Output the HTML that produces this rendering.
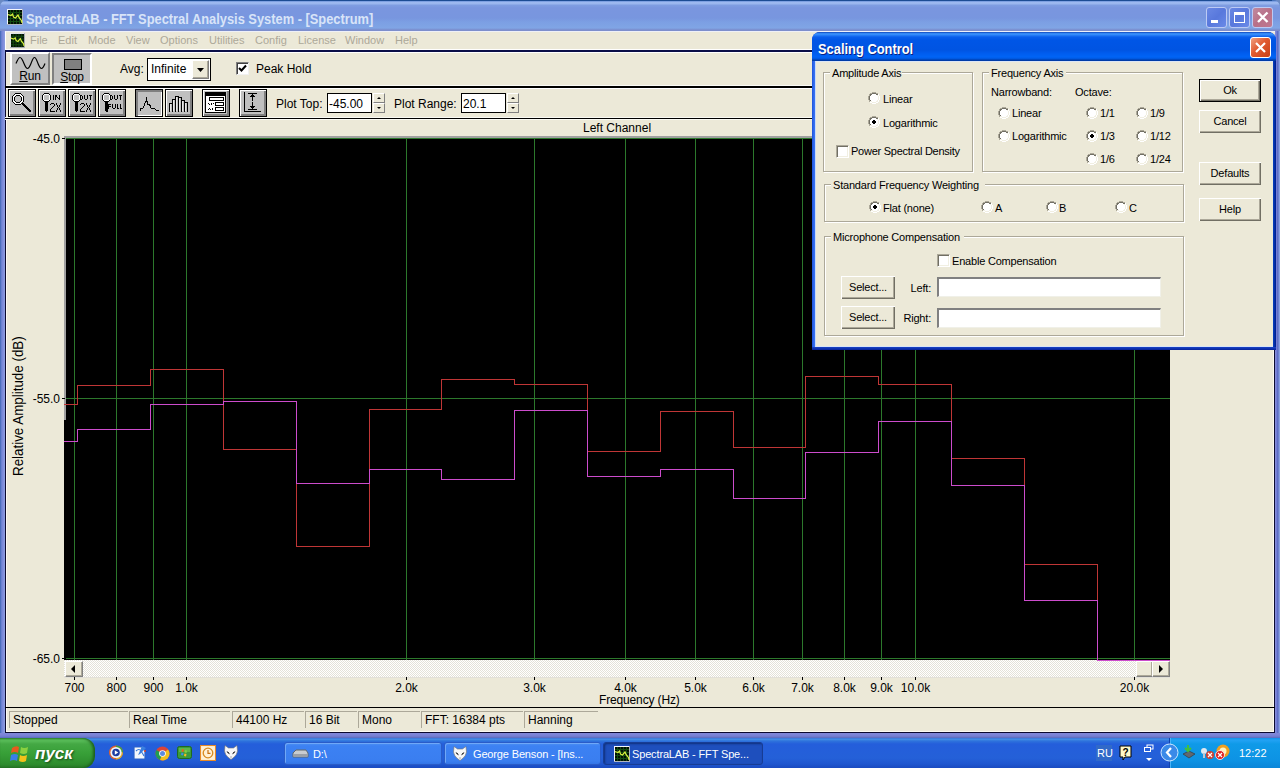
<!DOCTYPE html><html><head><meta charset="utf-8"><style>
html,body{margin:0;padding:0;}body{width:1280px;height:768px;overflow:hidden;position:relative;background:#ECE9D8;font-family:'Liberation Sans',sans-serif;color:#000;}
div{box-sizing:border-box;} svg{position:absolute;overflow:visible;}
</style></head><body>
<div style="position:absolute;left:0px;top:0px;width:1280px;height:32px;background:#6a8ac4;"></div>
<div style="position:absolute;left:0px;top:0px;width:1280px;height:31px;border-radius:7px 7px 0 0;background:linear-gradient(#2a5aa8 0px,#5f88d4 1px,#9db9f0 2px,#9ab6ee 4px,#7f9ee2 5px,#7a96df 8px,#7896df 18px,#7c9fe3 22px,#80a5e5 28px,#7a8ccc 30px,#8090cc 31px);"></div>
<div style="position:absolute;left:8px;top:0px;width:1264px;height:1px;background:#1c4c94;"></div>
<div style="position:absolute;left:0px;top:31px;width:5px;height:707px;background:linear-gradient(90deg,#3c62b2 0px,#5a7ac8 1px,#7888d8 2px,#7a88d8 3px,#8a9ae0 4px,#8a9ae0 5px);"></div>
<div style="position:absolute;left:1275px;top:31px;width:5px;height:707px;background:linear-gradient(90deg,#8c92dc 0px,#7a82d8 1px,#6c7ad2 2px,#5262bc 3px,#88a0e2 4px,#88a0e2 5px);"></div>
<div style="position:absolute;left:0px;top:733px;width:1280px;height:5px;background:linear-gradient(#8088d8 0px,#7c84d8 2px,#6c78cc 4px,#5468b8 5px);"></div>
<svg style="left:7px;top:9px" width="16" height="16" viewBox="0 0 16 16"><rect x="0" y="0" width="16" height="16" fill="#b0b4c0"/><rect x="0" y="0" width="15" height="15" fill="#f4f6fc"/><rect x="1" y="1" width="14" height="14" fill="#031003"/><path d="M1 3.5H15M1 6.5H15M1 9.5H15M1 12.5H15M3.5 1V15M6.5 1V15M9.5 1V15M12.5 1V15" stroke="#124a10" stroke-width="1"/><path d="M1 5.5L4 6.5L5.5 5L6.5 8L8.5 9L11 6L12 8.5L14.5 11.5L15 14" stroke="#d8f040" stroke-width="1.2" fill="none"/></svg>
<div style="position:absolute;left:26px;top:10px;white-space:nowrap;font-size:14px;line-height:18px;font-weight:bold;color:#d8e4f8;transform:scaleX(0.918);transform-origin:0 0;">SpectraLAB - FFT Spectral Analysis System - [Spectrum]</div>
<div style="position:absolute;left:1206px;top:7px;width:21px;height:21px;border:1px solid #bccaf4;border-radius:3px;background:linear-gradient(135deg,#6a88e4,#5878dc 50%,#6a8ae8);"></div><div style="position:absolute;left:1211px;top:20px;width:7px;height:3px;background:#fff;"></div>
<div style="position:absolute;left:1229px;top:7px;width:21px;height:21px;border:1px solid #bccaf4;border-radius:3px;background:linear-gradient(135deg,#6a88e4,#5878dc 50%,#6a8ae8);"></div><div style="position:absolute;left:1234px;top:12px;width:11px;height:11px;border:1px solid #fff;border-top:3px solid #fff;"></div>
<div style="position:absolute;left:1252px;top:7px;width:21px;height:21px;border:1px solid #bccaf4;border-radius:3px;background:linear-gradient(135deg,#c08aa0,#b87088 50%,#c07890);"></div><svg style="left:1252px;top:7px" width="21" height="21"><path d="M6 5.5L15.5 15M15.5 5.5L6 15" stroke="#fff" stroke-width="2.4"/></svg>
<div style="position:absolute;left:5px;top:31px;width:1270px;height:19px;background:#ECE9D8;border-top:1px solid #eef0f8;border-left:1px solid #fff;"></div>
<svg style="left:10px;top:33px" width="15" height="15" viewBox="0 0 16 16"><rect x="0" y="0" width="16" height="16" fill="#b0b4c0"/><rect x="0" y="0" width="15" height="15" fill="#f4f6fc"/><rect x="1" y="1" width="14" height="14" fill="#031003"/><path d="M1 3.5H15M1 6.5H15M1 9.5H15M1 12.5H15M3.5 1V15M6.5 1V15M9.5 1V15M12.5 1V15" stroke="#124a10" stroke-width="1"/><path d="M1 5.5L4 6.5L5.5 5L6.5 8L8.5 9L11 6L12 8.5L14.5 11.5L15 14" stroke="#d8f040" stroke-width="1.2" fill="none"/></svg>
<div style="position:absolute;left:30px;top:34px;white-space:nowrap;font-size:11px;line-height:13px;color:#aca899;">File</div>
<div style="position:absolute;left:58px;top:34px;white-space:nowrap;font-size:11px;line-height:13px;color:#aca899;">Edit</div>
<div style="position:absolute;left:88px;top:34px;white-space:nowrap;font-size:11px;line-height:13px;color:#aca899;">Mode</div>
<div style="position:absolute;left:126px;top:34px;white-space:nowrap;font-size:11px;line-height:13px;color:#aca899;">View</div>
<div style="position:absolute;left:160px;top:34px;white-space:nowrap;font-size:11px;line-height:13px;color:#aca899;">Options</div>
<div style="position:absolute;left:209px;top:34px;white-space:nowrap;font-size:11px;line-height:13px;color:#aca899;">Utilities</div>
<div style="position:absolute;left:255px;top:34px;white-space:nowrap;font-size:11px;line-height:13px;color:#aca899;">Config</div>
<div style="position:absolute;left:298px;top:34px;white-space:nowrap;font-size:11px;line-height:13px;color:#aca899;">License</div>
<div style="position:absolute;left:345px;top:34px;white-space:nowrap;font-size:11px;line-height:13px;color:#aca899;">Window</div>
<div style="position:absolute;left:395px;top:34px;white-space:nowrap;font-size:11px;line-height:13px;color:#aca899;">Help</div>
<div style="position:absolute;left:5px;top:49px;width:1270px;height:1px;background:#fff;"></div>
<div style="position:absolute;left:5px;top:50px;width:1270px;height:2px;background:#0b0f48;"></div>
<div style="position:absolute;left:5px;top:50px;width:1px;height:683px;background:#0a0a30;"></div>
<div style="position:absolute;left:6px;top:52px;width:1px;height:680px;background:#fbfaf4;"></div>
<div style="position:absolute;left:1274px;top:50px;width:1px;height:683px;background:#0a0a30;"></div>
<div style="position:absolute;left:1273px;top:52px;width:1px;height:680px;background:#fbfaf4;"></div>
<div style="position:absolute;left:5px;top:732px;width:1270px;height:1px;background:#0a0a30;"></div>
<div style="position:absolute;left:6px;top:731px;width:1268px;height:1px;background:#fbfaf4;"></div>
<div style="position:absolute;left:6px;top:52px;width:1268px;height:34px;background:#ECE9D8;border-top:1px solid #fff;border-bottom:1px solid #fafaf6;"></div>
<div style="position:absolute;left:10px;top:52px;width:40px;height:33px;background:#c0c0c0;border-top:2px solid #fff;border-left:2px solid #fff;border-right:2px solid #808080;border-bottom:2px solid #808080;"></div>
<svg style="left:10px;top:52px" width="40" height="33"><path d="M6 11.5C7.5 8 8.5 5.5 10 5.5S13 9 14 11.5S16 16.5 17.5 16.5S20 14 21 11.5S23 5.5 24.5 5.5S27 9 28 11.5S30 16.5 31.5 16.5S34 14 35 11.5" stroke="#000" stroke-width="1.2" fill="none"/></svg>
<div style="position:absolute;left:10px;top:69px;white-space:nowrap;font-size:12px;line-height:14px;width:40px;text-align:center;letter-spacing:-0.2px;"><u>R</u>un</div>
<div style="position:absolute;left:52px;top:53px;width:40px;height:32px;background:#c0c0c0;border-top:2px solid #808080;border-left:2px solid #808080;border-right:2px solid #fff;border-bottom:2px solid #fff;"></div>
<div style="position:absolute;left:64px;top:59px;width:18px;height:11px;background:#808080;border:1px solid #000;"></div>
<div style="position:absolute;left:52px;top:70px;white-space:nowrap;font-size:12px;line-height:14px;width:40px;text-align:center;letter-spacing:-0.3px;"><u>S</u>top</div>
<div style="position:absolute;left:120px;top:62px;white-space:nowrap;font-size:12px;line-height:14px;">Avg:</div>
<div style="position:absolute;left:147px;top:58px;width:64px;height:23px;background:#fff;border:1px solid #000;"></div>
<div style="position:absolute;left:151px;top:62px;white-space:nowrap;font-size:12px;line-height:14px;">Infinite</div>
<div style="position:absolute;left:192px;top:60px;width:17px;height:19px;background:#ECE9D8;border-top:1px solid #fff;border-left:1px solid #fff;border-right:1px solid #808080;border-bottom:1px solid #808080;box-shadow:inset -1px -1px #aca899;"></div>
<svg style="left:192px;top:60px" width="17" height="19"><path d="M5 8H12L8.5 12Z" fill="#000"/></svg>
<div style="position:absolute;left:236px;top:62px;width:13px;height:13px;background:#fff;border-top:1px solid #808080;border-left:1px solid #808080;border-right:1px solid #f0f0f0;border-bottom:1px solid #f0f0f0;box-shadow:inset 1px 1px #404040;"></div>
<svg style="left:236px;top:62px" width="13" height="13"><path d="M3 6L5.5 8.5L10 3.5" stroke="#000" stroke-width="2" fill="none"/></svg>
<div style="position:absolute;left:256px;top:62px;white-space:nowrap;font-size:12px;line-height:14px;">Peak Hold</div>
<div style="position:absolute;left:5px;top:86px;width:1270px;height:2px;background:#000;"></div>
<div style="position:absolute;left:6px;top:88px;width:1268px;height:30px;background:#ECE9D8;border-top:1px solid #fff;"></div>
<div style="position:absolute;left:8px;top:89px;width:28px;height:28px;background:#c0c0c0;border:1px solid #000;box-shadow:inset 1px 1px #fff, inset -2px -2px #808080;"></div>
<div style="position:absolute;left:38px;top:89px;width:28px;height:28px;background:#c0c0c0;border:1px solid #000;box-shadow:inset 1px 1px #fff, inset -2px -2px #808080;"></div>
<div style="position:absolute;left:68px;top:89px;width:28px;height:28px;background:#c0c0c0;border:1px solid #000;box-shadow:inset 1px 1px #fff, inset -2px -2px #808080;"></div>
<div style="position:absolute;left:98px;top:89px;width:28px;height:28px;background:#c0c0c0;border:1px solid #000;box-shadow:inset 1px 1px #fff, inset -2px -2px #808080;"></div>
<div style="position:absolute;left:135px;top:89px;width:28px;height:28px;background:#c0c0c0;border:1px solid #000;box-shadow:inset 2px 2px #808080, inset -1px -1px #fff;"></div>
<div style="position:absolute;left:165px;top:89px;width:28px;height:28px;background:#c0c0c0;border:1px solid #000;box-shadow:inset 1px 1px #fff, inset -2px -2px #808080;"></div>
<div style="position:absolute;left:202px;top:89px;width:28px;height:28px;background:#c0c0c0;border:1px solid #000;box-shadow:inset 1px 1px #fff, inset -2px -2px #808080;"></div>
<div style="position:absolute;left:239px;top:89px;width:28px;height:28px;background:#c0c0c0;border:1px solid #000;box-shadow:inset 1px 1px #fff, inset -2px -2px #808080;"></div>
<svg style="left:8px;top:89px" width="28" height="28" shape-rendering="crispEdges"><rect x="5" y="12" width="2" height="1" fill="#fff"/><rect x="13" y="12" width="2" height="1" fill="#fff"/><rect x="5" y="7" width="2" height="1" fill="#fff"/><rect x="13" y="7" width="2" height="1" fill="#fff"/><rect x="6" y="13" width="8" height="1" fill="#fff"/><rect x="5" y="10" width="1" height="1" fill="#fff"/><rect x="14" y="10" width="1" height="1" fill="#fff"/><rect x="7" y="5" width="6" height="1" fill="#fff"/><rect x="6" y="6" width="8" height="1" fill="#fff"/><rect x="7" y="14" width="6" height="1" fill="#fff"/><rect x="5" y="9" width="1" height="1" fill="#fff"/><rect x="14" y="9" width="1" height="1" fill="#fff"/><rect x="5" y="11" width="1" height="1" fill="#fff"/><rect x="14" y="11" width="1" height="1" fill="#fff"/><rect x="5" y="8" width="1" height="1" fill="#fff"/><rect x="14" y="8" width="1" height="1" fill="#fff"/><rect x="7" y="4" width="6" height="1" fill="#000"/><rect x="16" y="17" width="3" height="1" fill="#000"/><rect x="4" y="9" width="1" height="1" fill="#000"/><rect x="6" y="9" width="1" height="1" fill="#000"/><rect x="13" y="9" width="1" height="1" fill="#000"/><rect x="15" y="9" width="1" height="1" fill="#000"/><rect x="19" y="20" width="3" height="1" fill="#000"/><rect x="5" y="13" width="1" height="1" fill="#000"/><rect x="8" y="13" width="4" height="1" fill="#000"/><rect x="14" y="13" width="1" height="1" fill="#000"/><rect x="5" y="6" width="1" height="1" fill="#000"/><rect x="8" y="6" width="4" height="1" fill="#000"/><rect x="14" y="6" width="1" height="1" fill="#000"/><rect x="17" y="18" width="3" height="1" fill="#000"/><rect x="4" y="8" width="1" height="1" fill="#000"/><rect x="6" y="8" width="1" height="1" fill="#000"/><rect x="13" y="8" width="1" height="1" fill="#000"/><rect x="15" y="8" width="1" height="1" fill="#000"/><rect x="6" y="14" width="1" height="1" fill="#000"/><rect x="13" y="14" width="3" height="1" fill="#000"/><rect x="4" y="11" width="1" height="1" fill="#000"/><rect x="6" y="11" width="1" height="1" fill="#000"/><rect x="13" y="11" width="1" height="1" fill="#000"/><rect x="15" y="11" width="1" height="1" fill="#000"/><rect x="18" y="19" width="3" height="1" fill="#000"/><rect x="7" y="15" width="6" height="1" fill="#000"/><rect x="14" y="15" width="3" height="1" fill="#000"/><rect x="4" y="10" width="1" height="1" fill="#000"/><rect x="6" y="10" width="1" height="1" fill="#000"/><rect x="13" y="10" width="1" height="1" fill="#000"/><rect x="15" y="10" width="1" height="1" fill="#000"/><rect x="4" y="7" width="1" height="1" fill="#000"/><rect x="7" y="7" width="1" height="1" fill="#000"/><rect x="12" y="7" width="1" height="1" fill="#000"/><rect x="15" y="7" width="1" height="1" fill="#000"/><rect x="15" y="16" width="3" height="1" fill="#000"/><rect x="4" y="12" width="1" height="1" fill="#000"/><rect x="7" y="12" width="1" height="1" fill="#000"/><rect x="12" y="12" width="1" height="1" fill="#000"/><rect x="15" y="12" width="1" height="1" fill="#000"/><rect x="20" y="21" width="3" height="1" fill="#000"/><rect x="6" y="5" width="1" height="1" fill="#000"/><rect x="13" y="5" width="1" height="1" fill="#000"/><rect x="21" y="22" width="2" height="1" fill="#000"/></svg>
<svg style="left:38px;top:89px" width="28" height="28" shape-rendering="crispEdges"><rect x="5" y="7" width="1" height="1" fill="#fff"/><rect x="11" y="7" width="1" height="1" fill="#fff"/><rect x="6" y="5" width="5" height="1" fill="#fff"/><rect x="5" y="10" width="1" height="1" fill="#fff"/><rect x="11" y="10" width="1" height="1" fill="#fff"/><rect x="6" y="11" width="5" height="1" fill="#fff"/><rect x="5" y="8" width="1" height="1" fill="#fff"/><rect x="11" y="8" width="1" height="1" fill="#fff"/><rect x="5" y="6" width="1" height="1" fill="#fff"/><rect x="11" y="6" width="1" height="1" fill="#fff"/><rect x="5" y="9" width="1" height="1" fill="#fff"/><rect x="11" y="9" width="1" height="1" fill="#fff"/><rect x="7" y="17" width="3" height="1" fill="#000"/><rect x="15" y="17" width="1" height="1" fill="#000"/><rect x="19" y="17" width="1" height="1" fill="#000"/><rect x="21" y="17" width="1" height="1" fill="#000"/><rect x="7" y="16" width="3" height="1" fill="#000"/><rect x="16" y="16" width="1" height="1" fill="#000"/><rect x="19" y="16" width="1" height="1" fill="#000"/><rect x="21" y="16" width="1" height="1" fill="#000"/><rect x="4" y="9" width="1" height="1" fill="#000"/><rect x="12" y="9" width="1" height="1" fill="#000"/><rect x="15" y="9" width="1" height="1" fill="#000"/><rect x="17" y="9" width="1" height="1" fill="#000"/><rect x="20" y="9" width="2" height="1" fill="#000"/><rect x="5" y="5" width="1" height="1" fill="#000"/><rect x="11" y="5" width="1" height="1" fill="#000"/><rect x="8" y="22" width="1" height="1" fill="#000"/><rect x="12" y="22" width="5" height="1" fill="#000"/><rect x="18" y="22" width="1" height="1" fill="#000"/><rect x="22" y="22" width="1" height="1" fill="#000"/><rect x="7" y="18" width="3" height="1" fill="#000"/><rect x="14" y="18" width="1" height="1" fill="#000"/><rect x="20" y="18" width="1" height="1" fill="#000"/><rect x="7" y="14" width="3" height="1" fill="#000"/><rect x="13" y="14" width="3" height="1" fill="#000"/><rect x="18" y="14" width="1" height="1" fill="#000"/><rect x="22" y="14" width="1" height="1" fill="#000"/><rect x="7" y="19" width="3" height="1" fill="#000"/><rect x="13" y="19" width="1" height="1" fill="#000"/><rect x="19" y="19" width="1" height="1" fill="#000"/><rect x="21" y="19" width="1" height="1" fill="#000"/><rect x="4" y="7" width="1" height="1" fill="#000"/><rect x="12" y="7" width="1" height="1" fill="#000"/><rect x="15" y="7" width="1" height="1" fill="#000"/><rect x="17" y="7" width="2" height="1" fill="#000"/><rect x="21" y="7" width="1" height="1" fill="#000"/><rect x="6" y="4" width="5" height="1" fill="#000"/><rect x="7" y="15" width="3" height="1" fill="#000"/><rect x="12" y="15" width="1" height="1" fill="#000"/><rect x="16" y="15" width="1" height="1" fill="#000"/><rect x="18" y="15" width="1" height="1" fill="#000"/><rect x="22" y="15" width="1" height="1" fill="#000"/><rect x="6" y="12" width="5" height="1" fill="#000"/><rect x="7" y="21" width="3" height="1" fill="#000"/><rect x="12" y="21" width="1" height="1" fill="#000"/><rect x="18" y="21" width="1" height="1" fill="#000"/><rect x="22" y="21" width="1" height="1" fill="#000"/><rect x="7" y="20" width="3" height="1" fill="#000"/><rect x="12" y="20" width="1" height="1" fill="#000"/><rect x="19" y="20" width="1" height="1" fill="#000"/><rect x="21" y="20" width="1" height="1" fill="#000"/><rect x="4" y="6" width="1" height="1" fill="#000"/><rect x="12" y="6" width="1" height="1" fill="#000"/><rect x="15" y="6" width="1" height="1" fill="#000"/><rect x="17" y="6" width="2" height="1" fill="#000"/><rect x="21" y="6" width="1" height="1" fill="#000"/><rect x="4" y="8" width="1" height="1" fill="#000"/><rect x="12" y="8" width="1" height="1" fill="#000"/><rect x="15" y="8" width="1" height="1" fill="#000"/><rect x="17" y="8" width="1" height="1" fill="#000"/><rect x="19" y="8" width="1" height="1" fill="#000"/><rect x="21" y="8" width="1" height="1" fill="#000"/><rect x="5" y="11" width="1" height="1" fill="#000"/><rect x="11" y="11" width="1" height="1" fill="#000"/><rect x="7" y="13" width="3" height="1" fill="#000"/><rect x="4" y="10" width="1" height="1" fill="#000"/><rect x="12" y="10" width="1" height="1" fill="#000"/><rect x="15" y="10" width="1" height="1" fill="#000"/><rect x="17" y="10" width="1" height="1" fill="#000"/><rect x="21" y="10" width="1" height="1" fill="#000"/></svg>
<svg style="left:68px;top:89px" width="28" height="28" shape-rendering="crispEdges"><rect x="5" y="7" width="1" height="1" fill="#fff"/><rect x="11" y="7" width="1" height="1" fill="#fff"/><rect x="6" y="5" width="5" height="1" fill="#fff"/><rect x="5" y="10" width="1" height="1" fill="#fff"/><rect x="11" y="10" width="1" height="1" fill="#fff"/><rect x="6" y="11" width="5" height="1" fill="#fff"/><rect x="5" y="8" width="1" height="1" fill="#fff"/><rect x="11" y="8" width="1" height="1" fill="#fff"/><rect x="5" y="6" width="1" height="1" fill="#fff"/><rect x="11" y="6" width="1" height="1" fill="#fff"/><rect x="5" y="9" width="1" height="1" fill="#fff"/><rect x="11" y="9" width="1" height="1" fill="#fff"/><rect x="7" y="17" width="3" height="1" fill="#000"/><rect x="15" y="17" width="1" height="1" fill="#000"/><rect x="19" y="17" width="1" height="1" fill="#000"/><rect x="21" y="17" width="1" height="1" fill="#000"/><rect x="7" y="16" width="3" height="1" fill="#000"/><rect x="16" y="16" width="1" height="1" fill="#000"/><rect x="19" y="16" width="1" height="1" fill="#000"/><rect x="21" y="16" width="1" height="1" fill="#000"/><rect x="4" y="9" width="1" height="1" fill="#000"/><rect x="12" y="9" width="1" height="1" fill="#000"/><rect x="14" y="9" width="1" height="1" fill="#000"/><rect x="16" y="9" width="1" height="1" fill="#000"/><rect x="19" y="9" width="1" height="1" fill="#000"/><rect x="22" y="9" width="1" height="1" fill="#000"/><rect x="5" y="5" width="1" height="1" fill="#000"/><rect x="11" y="5" width="1" height="1" fill="#000"/><rect x="8" y="22" width="1" height="1" fill="#000"/><rect x="12" y="22" width="5" height="1" fill="#000"/><rect x="18" y="22" width="1" height="1" fill="#000"/><rect x="22" y="22" width="1" height="1" fill="#000"/><rect x="7" y="18" width="3" height="1" fill="#000"/><rect x="14" y="18" width="1" height="1" fill="#000"/><rect x="20" y="18" width="1" height="1" fill="#000"/><rect x="7" y="14" width="3" height="1" fill="#000"/><rect x="13" y="14" width="3" height="1" fill="#000"/><rect x="18" y="14" width="1" height="1" fill="#000"/><rect x="22" y="14" width="1" height="1" fill="#000"/><rect x="4" y="10" width="1" height="1" fill="#000"/><rect x="12" y="10" width="2" height="1" fill="#000"/><rect x="17" y="10" width="2" height="1" fill="#000"/><rect x="22" y="10" width="1" height="1" fill="#000"/><rect x="7" y="19" width="3" height="1" fill="#000"/><rect x="13" y="19" width="1" height="1" fill="#000"/><rect x="19" y="19" width="1" height="1" fill="#000"/><rect x="21" y="19" width="1" height="1" fill="#000"/><rect x="6" y="4" width="5" height="1" fill="#000"/><rect x="4" y="6" width="1" height="1" fill="#000"/><rect x="12" y="6" width="2" height="1" fill="#000"/><rect x="16" y="6" width="1" height="1" fill="#000"/><rect x="19" y="6" width="1" height="1" fill="#000"/><rect x="21" y="6" width="3" height="1" fill="#000"/><rect x="7" y="15" width="3" height="1" fill="#000"/><rect x="12" y="15" width="1" height="1" fill="#000"/><rect x="16" y="15" width="1" height="1" fill="#000"/><rect x="18" y="15" width="1" height="1" fill="#000"/><rect x="22" y="15" width="1" height="1" fill="#000"/><rect x="6" y="12" width="5" height="1" fill="#000"/><rect x="7" y="21" width="3" height="1" fill="#000"/><rect x="12" y="21" width="1" height="1" fill="#000"/><rect x="18" y="21" width="1" height="1" fill="#000"/><rect x="22" y="21" width="1" height="1" fill="#000"/><rect x="4" y="8" width="1" height="1" fill="#000"/><rect x="12" y="8" width="1" height="1" fill="#000"/><rect x="14" y="8" width="1" height="1" fill="#000"/><rect x="16" y="8" width="1" height="1" fill="#000"/><rect x="19" y="8" width="1" height="1" fill="#000"/><rect x="22" y="8" width="1" height="1" fill="#000"/><rect x="7" y="20" width="3" height="1" fill="#000"/><rect x="12" y="20" width="1" height="1" fill="#000"/><rect x="19" y="20" width="1" height="1" fill="#000"/><rect x="21" y="20" width="1" height="1" fill="#000"/><rect x="4" y="7" width="1" height="1" fill="#000"/><rect x="12" y="7" width="1" height="1" fill="#000"/><rect x="14" y="7" width="1" height="1" fill="#000"/><rect x="16" y="7" width="1" height="1" fill="#000"/><rect x="19" y="7" width="1" height="1" fill="#000"/><rect x="22" y="7" width="1" height="1" fill="#000"/><rect x="5" y="11" width="1" height="1" fill="#000"/><rect x="11" y="11" width="1" height="1" fill="#000"/><rect x="7" y="13" width="3" height="1" fill="#000"/></svg>
<svg style="left:98px;top:89px" width="28" height="28" shape-rendering="crispEdges"><rect x="5" y="7" width="1" height="1" fill="#fff"/><rect x="11" y="7" width="1" height="1" fill="#fff"/><rect x="6" y="5" width="5" height="1" fill="#fff"/><rect x="5" y="10" width="1" height="1" fill="#fff"/><rect x="11" y="10" width="1" height="1" fill="#fff"/><rect x="8" y="18" width="1" height="1" fill="#fff"/><rect x="6" y="11" width="5" height="1" fill="#fff"/><rect x="5" y="8" width="1" height="1" fill="#fff"/><rect x="11" y="8" width="1" height="1" fill="#fff"/><rect x="8" y="15" width="1" height="1" fill="#fff"/><rect x="5" y="6" width="1" height="1" fill="#fff"/><rect x="11" y="6" width="1" height="1" fill="#fff"/><rect x="5" y="9" width="1" height="1" fill="#fff"/><rect x="11" y="9" width="1" height="1" fill="#fff"/><rect x="8" y="17" width="1" height="1" fill="#fff"/><rect x="8" y="16" width="1" height="1" fill="#fff"/><rect x="7" y="17" width="6" height="1" fill="#000"/><rect x="14" y="17" width="1" height="1" fill="#000"/><rect x="17" y="17" width="1" height="1" fill="#000"/><rect x="19" y="17" width="1" height="1" fill="#000"/><rect x="22" y="17" width="1" height="1" fill="#000"/><rect x="4" y="9" width="1" height="1" fill="#000"/><rect x="12" y="9" width="1" height="1" fill="#000"/><rect x="14" y="9" width="1" height="1" fill="#000"/><rect x="16" y="9" width="1" height="1" fill="#000"/><rect x="19" y="9" width="1" height="1" fill="#000"/><rect x="22" y="9" width="1" height="1" fill="#000"/><rect x="5" y="5" width="1" height="1" fill="#000"/><rect x="11" y="5" width="1" height="1" fill="#000"/><rect x="7" y="18" width="4" height="1" fill="#000"/><rect x="14" y="18" width="1" height="1" fill="#000"/><rect x="17" y="18" width="1" height="1" fill="#000"/><rect x="19" y="18" width="1" height="1" fill="#000"/><rect x="22" y="18" width="1" height="1" fill="#000"/><rect x="4" y="10" width="1" height="1" fill="#000"/><rect x="12" y="10" width="2" height="1" fill="#000"/><rect x="17" y="10" width="2" height="1" fill="#000"/><rect x="22" y="10" width="1" height="1" fill="#000"/><rect x="7" y="19" width="4" height="1" fill="#000"/><rect x="15" y="19" width="2" height="1" fill="#000"/><rect x="19" y="19" width="2" height="1" fill="#000"/><rect x="22" y="19" width="2" height="1" fill="#000"/><rect x="7" y="15" width="6" height="1" fill="#000"/><rect x="14" y="15" width="1" height="1" fill="#000"/><rect x="17" y="15" width="1" height="1" fill="#000"/><rect x="19" y="15" width="1" height="1" fill="#000"/><rect x="22" y="15" width="1" height="1" fill="#000"/><rect x="6" y="4" width="5" height="1" fill="#000"/><rect x="4" y="6" width="1" height="1" fill="#000"/><rect x="12" y="6" width="2" height="1" fill="#000"/><rect x="16" y="6" width="1" height="1" fill="#000"/><rect x="19" y="6" width="1" height="1" fill="#000"/><rect x="21" y="6" width="3" height="1" fill="#000"/><rect x="6" y="12" width="5" height="1" fill="#000"/><rect x="7" y="21" width="3" height="1" fill="#000"/><rect x="4" y="8" width="1" height="1" fill="#000"/><rect x="12" y="8" width="1" height="1" fill="#000"/><rect x="14" y="8" width="1" height="1" fill="#000"/><rect x="16" y="8" width="1" height="1" fill="#000"/><rect x="19" y="8" width="1" height="1" fill="#000"/><rect x="22" y="8" width="1" height="1" fill="#000"/><rect x="7" y="16" width="4" height="1" fill="#000"/><rect x="14" y="16" width="1" height="1" fill="#000"/><rect x="17" y="16" width="1" height="1" fill="#000"/><rect x="19" y="16" width="1" height="1" fill="#000"/><rect x="22" y="16" width="1" height="1" fill="#000"/><rect x="7" y="14" width="3" height="1" fill="#000"/><rect x="4" y="7" width="1" height="1" fill="#000"/><rect x="12" y="7" width="1" height="1" fill="#000"/><rect x="14" y="7" width="1" height="1" fill="#000"/><rect x="16" y="7" width="1" height="1" fill="#000"/><rect x="19" y="7" width="1" height="1" fill="#000"/><rect x="22" y="7" width="1" height="1" fill="#000"/><rect x="7" y="20" width="3" height="1" fill="#000"/><rect x="5" y="11" width="1" height="1" fill="#000"/><rect x="11" y="11" width="1" height="1" fill="#000"/><rect x="7" y="13" width="3" height="1" fill="#000"/><rect x="8" y="22" width="2" height="1" fill="#000"/></svg>
<svg style="left:135px;top:89px" width="28" height="28" shape-rendering="crispEdges"><rect x="10" y="13" width="1" height="1" fill="#000"/><rect x="12" y="13" width="1" height="1" fill="#000"/><rect x="5" y="20" width="1" height="1" fill="#000"/><rect x="20" y="20" width="1" height="1" fill="#000"/><rect x="9" y="16" width="1" height="1" fill="#000"/><rect x="14" y="16" width="2" height="1" fill="#000"/><rect x="9" y="14" width="1" height="1" fill="#000"/><rect x="12" y="14" width="1" height="1" fill="#000"/><rect x="5" y="19" width="3" height="1" fill="#000"/><rect x="16" y="19" width="4" height="1" fill="#000"/><rect x="8" y="18" width="1" height="1" fill="#000"/><rect x="15" y="18" width="1" height="1" fill="#000"/><rect x="11" y="8" width="1" height="1" fill="#000"/><rect x="10" y="12" width="3" height="1" fill="#000"/><rect x="11" y="11" width="1" height="1" fill="#000"/><rect x="8" y="17" width="1" height="1" fill="#000"/><rect x="15" y="17" width="1" height="1" fill="#000"/><rect x="5" y="21" width="1" height="1" fill="#000"/><rect x="21" y="21" width="3" height="1" fill="#000"/><rect x="9" y="15" width="1" height="1" fill="#000"/><rect x="12" y="15" width="3" height="1" fill="#000"/><rect x="11" y="10" width="1" height="1" fill="#000"/><rect x="11" y="9" width="1" height="1" fill="#000"/></svg>
<svg style="left:165px;top:89px" width="28" height="28" shape-rendering="crispEdges"><rect x="8" y="14" width="1" height="1" fill="#e8e8e8"/><rect x="11" y="14" width="1" height="1" fill="#e8e8e8"/><rect x="14" y="14" width="1" height="1" fill="#e8e8e8"/><rect x="17" y="14" width="1" height="1" fill="#e8e8e8"/><rect x="20" y="14" width="1" height="1" fill="#e8e8e8"/><rect x="5" y="17" width="1" height="1" fill="#e8e8e8"/><rect x="8" y="17" width="1" height="1" fill="#e8e8e8"/><rect x="11" y="17" width="1" height="1" fill="#e8e8e8"/><rect x="14" y="17" width="1" height="1" fill="#e8e8e8"/><rect x="17" y="17" width="1" height="1" fill="#e8e8e8"/><rect x="20" y="17" width="1" height="1" fill="#e8e8e8"/><rect x="11" y="10" width="1" height="1" fill="#e8e8e8"/><rect x="14" y="10" width="1" height="1" fill="#e8e8e8"/><rect x="5" y="16" width="1" height="1" fill="#e8e8e8"/><rect x="8" y="16" width="1" height="1" fill="#e8e8e8"/><rect x="11" y="16" width="1" height="1" fill="#e8e8e8"/><rect x="14" y="16" width="1" height="1" fill="#e8e8e8"/><rect x="17" y="16" width="1" height="1" fill="#e8e8e8"/><rect x="20" y="16" width="1" height="1" fill="#e8e8e8"/><rect x="5" y="19" width="1" height="1" fill="#e8e8e8"/><rect x="8" y="19" width="1" height="1" fill="#e8e8e8"/><rect x="11" y="19" width="1" height="1" fill="#e8e8e8"/><rect x="14" y="19" width="1" height="1" fill="#e8e8e8"/><rect x="17" y="19" width="1" height="1" fill="#e8e8e8"/><rect x="20" y="19" width="1" height="1" fill="#e8e8e8"/><rect x="5" y="20" width="1" height="1" fill="#e8e8e8"/><rect x="8" y="20" width="1" height="1" fill="#e8e8e8"/><rect x="11" y="20" width="1" height="1" fill="#e8e8e8"/><rect x="14" y="20" width="1" height="1" fill="#e8e8e8"/><rect x="17" y="20" width="1" height="1" fill="#e8e8e8"/><rect x="20" y="20" width="1" height="1" fill="#e8e8e8"/><rect x="8" y="13" width="1" height="1" fill="#e8e8e8"/><rect x="11" y="13" width="1" height="1" fill="#e8e8e8"/><rect x="14" y="13" width="1" height="1" fill="#e8e8e8"/><rect x="17" y="13" width="1" height="1" fill="#e8e8e8"/><rect x="8" y="12" width="1" height="1" fill="#e8e8e8"/><rect x="11" y="12" width="1" height="1" fill="#e8e8e8"/><rect x="14" y="12" width="1" height="1" fill="#e8e8e8"/><rect x="17" y="12" width="1" height="1" fill="#e8e8e8"/><rect x="5" y="15" width="1" height="1" fill="#e8e8e8"/><rect x="8" y="15" width="1" height="1" fill="#e8e8e8"/><rect x="11" y="15" width="1" height="1" fill="#e8e8e8"/><rect x="14" y="15" width="1" height="1" fill="#e8e8e8"/><rect x="17" y="15" width="1" height="1" fill="#e8e8e8"/><rect x="20" y="15" width="1" height="1" fill="#e8e8e8"/><rect x="5" y="18" width="1" height="1" fill="#e8e8e8"/><rect x="8" y="18" width="1" height="1" fill="#e8e8e8"/><rect x="11" y="18" width="1" height="1" fill="#e8e8e8"/><rect x="14" y="18" width="1" height="1" fill="#e8e8e8"/><rect x="17" y="18" width="1" height="1" fill="#e8e8e8"/><rect x="20" y="18" width="1" height="1" fill="#e8e8e8"/><rect x="11" y="8" width="1" height="1" fill="#e8e8e8"/><rect x="5" y="21" width="1" height="1" fill="#e8e8e8"/><rect x="8" y="21" width="1" height="1" fill="#e8e8e8"/><rect x="11" y="21" width="1" height="1" fill="#e8e8e8"/><rect x="14" y="21" width="1" height="1" fill="#e8e8e8"/><rect x="17" y="21" width="1" height="1" fill="#e8e8e8"/><rect x="20" y="21" width="1" height="1" fill="#e8e8e8"/><rect x="8" y="11" width="1" height="1" fill="#e8e8e8"/><rect x="11" y="11" width="1" height="1" fill="#e8e8e8"/><rect x="14" y="11" width="1" height="1" fill="#e8e8e8"/><rect x="11" y="9" width="1" height="1" fill="#e8e8e8"/><rect x="14" y="9" width="1" height="1" fill="#e8e8e8"/><rect x="4" y="20" width="1" height="1" fill="#000"/><rect x="7" y="20" width="1" height="1" fill="#000"/><rect x="10" y="20" width="1" height="1" fill="#000"/><rect x="13" y="20" width="1" height="1" fill="#000"/><rect x="16" y="20" width="1" height="1" fill="#000"/><rect x="19" y="20" width="1" height="1" fill="#000"/><rect x="22" y="20" width="1" height="1" fill="#000"/><rect x="4" y="17" width="1" height="1" fill="#000"/><rect x="7" y="17" width="1" height="1" fill="#000"/><rect x="10" y="17" width="1" height="1" fill="#000"/><rect x="13" y="17" width="1" height="1" fill="#000"/><rect x="16" y="17" width="1" height="1" fill="#000"/><rect x="19" y="17" width="1" height="1" fill="#000"/><rect x="22" y="17" width="1" height="1" fill="#000"/><rect x="4" y="18" width="1" height="1" fill="#000"/><rect x="7" y="18" width="1" height="1" fill="#000"/><rect x="10" y="18" width="1" height="1" fill="#000"/><rect x="13" y="18" width="1" height="1" fill="#000"/><rect x="16" y="18" width="1" height="1" fill="#000"/><rect x="19" y="18" width="1" height="1" fill="#000"/><rect x="22" y="18" width="1" height="1" fill="#000"/><rect x="10" y="8" width="1" height="1" fill="#000"/><rect x="13" y="8" width="4" height="1" fill="#000"/><rect x="7" y="13" width="1" height="1" fill="#000"/><rect x="10" y="13" width="1" height="1" fill="#000"/><rect x="13" y="13" width="1" height="1" fill="#000"/><rect x="16" y="13" width="1" height="1" fill="#000"/><rect x="19" y="13" width="4" height="1" fill="#000"/><rect x="7" y="10" width="4" height="1" fill="#000"/><rect x="13" y="10" width="1" height="1" fill="#000"/><rect x="16" y="10" width="1" height="1" fill="#000"/><rect x="4" y="22" width="1" height="1" fill="#000"/><rect x="7" y="22" width="1" height="1" fill="#000"/><rect x="10" y="22" width="1" height="1" fill="#000"/><rect x="13" y="22" width="1" height="1" fill="#000"/><rect x="16" y="22" width="1" height="1" fill="#000"/><rect x="19" y="22" width="1" height="1" fill="#000"/><rect x="22" y="22" width="1" height="1" fill="#000"/><rect x="4" y="19" width="1" height="1" fill="#000"/><rect x="7" y="19" width="1" height="1" fill="#000"/><rect x="10" y="19" width="1" height="1" fill="#000"/><rect x="13" y="19" width="1" height="1" fill="#000"/><rect x="16" y="19" width="1" height="1" fill="#000"/><rect x="19" y="19" width="1" height="1" fill="#000"/><rect x="22" y="19" width="1" height="1" fill="#000"/><rect x="7" y="11" width="1" height="1" fill="#000"/><rect x="10" y="11" width="1" height="1" fill="#000"/><rect x="13" y="11" width="1" height="1" fill="#000"/><rect x="16" y="11" width="4" height="1" fill="#000"/><rect x="10" y="7" width="4" height="1" fill="#000"/><rect x="4" y="15" width="1" height="1" fill="#000"/><rect x="7" y="15" width="1" height="1" fill="#000"/><rect x="10" y="15" width="1" height="1" fill="#000"/><rect x="13" y="15" width="1" height="1" fill="#000"/><rect x="16" y="15" width="1" height="1" fill="#000"/><rect x="19" y="15" width="1" height="1" fill="#000"/><rect x="22" y="15" width="1" height="1" fill="#000"/><rect x="7" y="12" width="1" height="1" fill="#000"/><rect x="10" y="12" width="1" height="1" fill="#000"/><rect x="13" y="12" width="1" height="1" fill="#000"/><rect x="16" y="12" width="1" height="1" fill="#000"/><rect x="19" y="12" width="1" height="1" fill="#000"/><rect x="4" y="21" width="1" height="1" fill="#000"/><rect x="7" y="21" width="1" height="1" fill="#000"/><rect x="10" y="21" width="1" height="1" fill="#000"/><rect x="13" y="21" width="1" height="1" fill="#000"/><rect x="16" y="21" width="1" height="1" fill="#000"/><rect x="19" y="21" width="1" height="1" fill="#000"/><rect x="22" y="21" width="1" height="1" fill="#000"/><rect x="4" y="14" width="4" height="1" fill="#000"/><rect x="10" y="14" width="1" height="1" fill="#000"/><rect x="13" y="14" width="1" height="1" fill="#000"/><rect x="16" y="14" width="1" height="1" fill="#000"/><rect x="19" y="14" width="1" height="1" fill="#000"/><rect x="22" y="14" width="1" height="1" fill="#000"/><rect x="4" y="16" width="1" height="1" fill="#000"/><rect x="7" y="16" width="1" height="1" fill="#000"/><rect x="10" y="16" width="1" height="1" fill="#000"/><rect x="13" y="16" width="1" height="1" fill="#000"/><rect x="16" y="16" width="1" height="1" fill="#000"/><rect x="19" y="16" width="1" height="1" fill="#000"/><rect x="22" y="16" width="1" height="1" fill="#000"/><rect x="10" y="9" width="1" height="1" fill="#000"/><rect x="13" y="9" width="1" height="1" fill="#000"/><rect x="16" y="9" width="1" height="1" fill="#000"/></svg>
<svg style="left:202px;top:89px" width="28" height="28" shape-rendering="crispEdges"><rect x="4" y="21" width="19" height="1" fill="#fff"/><rect x="4" y="18" width="19" height="1" fill="#fff"/><rect x="4" y="20" width="19" height="1" fill="#fff"/><rect x="4" y="17" width="19" height="1" fill="#fff"/><rect x="4" y="16" width="19" height="1" fill="#fff"/><rect x="4" y="9" width="19" height="1" fill="#fff"/><rect x="4" y="13" width="19" height="1" fill="#fff"/><rect x="4" y="10" width="19" height="1" fill="#fff"/><rect x="4" y="8" width="19" height="1" fill="#fff"/><rect x="4" y="12" width="19" height="1" fill="#fff"/><rect x="4" y="19" width="19" height="1" fill="#fff"/><rect x="4" y="14" width="19" height="1" fill="#fff"/><rect x="4" y="22" width="19" height="1" fill="#fff"/><rect x="4" y="11" width="19" height="1" fill="#fff"/><rect x="4" y="15" width="19" height="1" fill="#fff"/><rect x="4" y="7" width="19" height="1" fill="#fff"/><rect x="4" y="4" width="1" height="1" fill="#c8c8c8"/><rect x="6" y="4" width="14" height="1" fill="#c8c8c8"/><rect x="21" y="4" width="2" height="1" fill="#c8c8c8"/><rect x="4" y="5" width="1" height="1" fill="#c8c8c8"/><rect x="6" y="5" width="1" height="1" fill="#c8c8c8"/><rect x="8" y="5" width="1" height="1" fill="#c8c8c8"/><rect x="10" y="5" width="1" height="1" fill="#c8c8c8"/><rect x="12" y="5" width="1" height="1" fill="#c8c8c8"/><rect x="14" y="5" width="1" height="1" fill="#c8c8c8"/><rect x="16" y="5" width="1" height="1" fill="#c8c8c8"/><rect x="18" y="5" width="1" height="1" fill="#c8c8c8"/><rect x="21" y="5" width="2" height="1" fill="#c8c8c8"/><rect x="3" y="4" width="21" height="1" fill="#000"/><rect x="3" y="21" width="1" height="1" fill="#000"/><rect x="13" y="21" width="9" height="1" fill="#000"/><rect x="23" y="21" width="1" height="1" fill="#000"/><rect x="3" y="16" width="1" height="1" fill="#000"/><rect x="13" y="16" width="9" height="1" fill="#000"/><rect x="23" y="16" width="1" height="1" fill="#000"/><rect x="3" y="3" width="21" height="1" fill="#000"/><rect x="3" y="13" width="1" height="1" fill="#000"/><rect x="13" y="13" width="9" height="1" fill="#000"/><rect x="23" y="13" width="1" height="1" fill="#000"/><rect x="3" y="6" width="21" height="1" fill="#000"/><rect x="3" y="8" width="1" height="1" fill="#000"/><rect x="7" y="8" width="15" height="1" fill="#000"/><rect x="23" y="8" width="1" height="1" fill="#000"/><rect x="3" y="5" width="21" height="1" fill="#000"/><rect x="3" y="22" width="1" height="1" fill="#000"/><rect x="23" y="22" width="1" height="1" fill="#000"/><rect x="3" y="18" width="1" height="1" fill="#000"/><rect x="13" y="18" width="9" height="1" fill="#000"/><rect x="23" y="18" width="1" height="1" fill="#000"/><rect x="3" y="14" width="1" height="1" fill="#000"/><rect x="6" y="14" width="1" height="1" fill="#000"/><rect x="9" y="14" width="1" height="1" fill="#000"/><rect x="11" y="14" width="1" height="1" fill="#000"/><rect x="13" y="14" width="1" height="1" fill="#000"/><rect x="21" y="14" width="1" height="1" fill="#000"/><rect x="23" y="14" width="1" height="1" fill="#000"/><rect x="3" y="23" width="21" height="1" fill="#000"/><rect x="3" y="10" width="1" height="1" fill="#000"/><rect x="7" y="10" width="1" height="1" fill="#000"/><rect x="21" y="10" width="1" height="1" fill="#000"/><rect x="23" y="10" width="1" height="1" fill="#000"/><rect x="3" y="9" width="1" height="1" fill="#000"/><rect x="7" y="9" width="1" height="1" fill="#000"/><rect x="21" y="9" width="1" height="1" fill="#000"/><rect x="23" y="9" width="1" height="1" fill="#000"/><rect x="3" y="20" width="1" height="1" fill="#000"/><rect x="6" y="20" width="1" height="1" fill="#000"/><rect x="8" y="20" width="1" height="1" fill="#000"/><rect x="10" y="20" width="1" height="1" fill="#000"/><rect x="13" y="20" width="1" height="1" fill="#000"/><rect x="21" y="20" width="1" height="1" fill="#000"/><rect x="23" y="20" width="1" height="1" fill="#000"/><rect x="3" y="19" width="1" height="1" fill="#000"/><rect x="7" y="19" width="1" height="1" fill="#000"/><rect x="10" y="19" width="1" height="1" fill="#000"/><rect x="13" y="19" width="1" height="1" fill="#000"/><rect x="21" y="19" width="1" height="1" fill="#000"/><rect x="23" y="19" width="1" height="1" fill="#000"/><rect x="3" y="15" width="1" height="1" fill="#000"/><rect x="7" y="15" width="1" height="1" fill="#000"/><rect x="9" y="15" width="1" height="1" fill="#000"/><rect x="13" y="15" width="1" height="1" fill="#000"/><rect x="21" y="15" width="1" height="1" fill="#000"/><rect x="23" y="15" width="1" height="1" fill="#000"/><rect x="3" y="11" width="1" height="1" fill="#000"/><rect x="7" y="11" width="15" height="1" fill="#000"/><rect x="23" y="11" width="1" height="1" fill="#000"/><rect x="3" y="17" width="1" height="1" fill="#000"/><rect x="23" y="17" width="1" height="1" fill="#000"/><rect x="3" y="12" width="1" height="1" fill="#000"/><rect x="23" y="12" width="1" height="1" fill="#000"/><rect x="3" y="7" width="1" height="1" fill="#000"/><rect x="23" y="7" width="1" height="1" fill="#000"/></svg>
<svg style="left:239px;top:89px" width="28" height="28" shape-rendering="crispEdges"><rect x="5" y="4" width="1" height="1" fill="#000"/><rect x="9" y="4" width="9" height="1" fill="#000"/><rect x="5" y="20" width="1" height="1" fill="#000"/><rect x="9" y="20" width="9" height="1" fill="#000"/><rect x="5" y="10" width="1" height="1" fill="#000"/><rect x="13" y="10" width="1" height="1" fill="#000"/><rect x="5" y="22" width="17" height="1" fill="#000"/><rect x="5" y="19" width="1" height="1" fill="#000"/><rect x="13" y="19" width="1" height="1" fill="#000"/><rect x="5" y="8" width="1" height="1" fill="#000"/><rect x="13" y="8" width="1" height="1" fill="#000"/><rect x="5" y="17" width="1" height="1" fill="#000"/><rect x="11" y="17" width="5" height="1" fill="#000"/><rect x="5" y="3" width="1" height="1" fill="#000"/><rect x="5" y="18" width="1" height="1" fill="#000"/><rect x="12" y="18" width="3" height="1" fill="#000"/><rect x="5" y="12" width="1" height="1" fill="#000"/><rect x="5" y="7" width="1" height="1" fill="#000"/><rect x="11" y="7" width="5" height="1" fill="#000"/><rect x="5" y="21" width="1" height="1" fill="#000"/><rect x="5" y="5" width="1" height="1" fill="#000"/><rect x="13" y="5" width="1" height="1" fill="#000"/><rect x="5" y="14" width="1" height="1" fill="#000"/><rect x="13" y="14" width="1" height="1" fill="#000"/><rect x="5" y="16" width="1" height="1" fill="#000"/><rect x="13" y="16" width="1" height="1" fill="#000"/><rect x="5" y="6" width="1" height="1" fill="#000"/><rect x="12" y="6" width="3" height="1" fill="#000"/><rect x="5" y="9" width="1" height="1" fill="#000"/><rect x="13" y="9" width="1" height="1" fill="#000"/><rect x="5" y="11" width="1" height="1" fill="#000"/><rect x="13" y="11" width="1" height="1" fill="#000"/><rect x="5" y="13" width="1" height="1" fill="#000"/><rect x="13" y="13" width="1" height="1" fill="#000"/><rect x="5" y="15" width="1" height="1" fill="#000"/><rect x="13" y="15" width="1" height="1" fill="#000"/></svg>
<div style="position:absolute;left:276px;top:97px;white-space:nowrap;font-size:12px;line-height:14px;">Plot Top:</div>
<div style="position:absolute;left:327px;top:93px;width:45px;height:20px;background:#fff;border:1px solid #000;"></div><div style="position:absolute;left:329px;top:97px;white-space:nowrap;font-size:12px;line-height:14px;">-45.00</div>
<div style="position:absolute;left:373px;top:93px;width:12px;height:10px;background:#ECE9D8;border-top:1px solid #fff;border-left:1px solid #fff;border-right:1px solid #808080;border-bottom:1px solid #808080;"></div><div style="position:absolute;left:373px;top:103px;width:12px;height:10px;background:#ECE9D8;border-top:1px solid #fff;border-left:1px solid #fff;border-right:1px solid #808080;border-bottom:1px solid #808080;"></div><svg style="left:373px;top:93px" width="12" height="20"><path d="M4 6H8L6 4Z M4 14H8L6 16Z" fill="#000"/></svg>
<div style="position:absolute;left:394px;top:97px;white-space:nowrap;font-size:12px;line-height:14px;">Plot Range:</div>
<div style="position:absolute;left:461px;top:93px;width:45px;height:20px;background:#fff;border:1px solid #000;"></div><div style="position:absolute;left:463px;top:97px;white-space:nowrap;font-size:12px;line-height:14px;">20.1</div>
<div style="position:absolute;left:507px;top:93px;width:12px;height:10px;background:#ECE9D8;border-top:1px solid #fff;border-left:1px solid #fff;border-right:1px solid #808080;border-bottom:1px solid #808080;"></div><div style="position:absolute;left:507px;top:103px;width:12px;height:10px;background:#ECE9D8;border-top:1px solid #fff;border-left:1px solid #fff;border-right:1px solid #808080;border-bottom:1px solid #808080;"></div><svg style="left:507px;top:93px" width="12" height="20"><path d="M4 6H8L6 4Z M4 14H8L6 16Z" fill="#000"/></svg>
<div style="position:absolute;left:5px;top:117px;width:1270px;height:1px;background:#fafaf4;"></div>
<div style="position:absolute;left:5px;top:118px;width:1270px;height:1px;background:#000;"></div>
<div style="position:absolute;left:5px;top:119px;width:1270px;height:1px;background:#fafaf4;"></div>
<div style="position:absolute;left:583px;top:121px;white-space:nowrap;font-size:12px;line-height:14px;">Left Channel</div>
<svg style="left:0;top:0" width="1280" height="768" shape-rendering="crispEdges"><rect x="64" y="136" width="1106" height="2" fill="#a0a0a0"/><rect x="64" y="138" width="1106" height="522" fill="#000"/><rect x="64" y="136" width="2" height="284" fill="#a0a0a0"/><rect x="74" y="138" width="1" height="522" fill="#2c782c"/><rect x="116" y="138" width="1" height="522" fill="#2c782c"/><rect x="153" y="138" width="1" height="522" fill="#2c782c"/><rect x="186" y="138" width="1" height="522" fill="#2c782c"/><rect x="406" y="138" width="1" height="522" fill="#2c782c"/><rect x="534" y="138" width="1" height="522" fill="#2c782c"/><rect x="625" y="138" width="1" height="522" fill="#2c782c"/><rect x="695" y="138" width="1" height="522" fill="#2c782c"/><rect x="753" y="138" width="1" height="522" fill="#2c782c"/><rect x="802" y="138" width="1" height="522" fill="#2c782c"/><rect x="844" y="138" width="1" height="522" fill="#2c782c"/><rect x="881" y="138" width="1" height="522" fill="#2c782c"/><rect x="915" y="138" width="1" height="522" fill="#2c782c"/><rect x="1134" y="138" width="1" height="522" fill="#2c782c"/><rect x="66" y="138" width="1104" height="1" fill="#2c782c"/><rect x="66" y="398" width="1104" height="1" fill="#2c782c"/><rect x="66" y="658" width="1104" height="1" fill="#2c782c"/><defs><pattern id="chk" width="2" height="2" patternUnits="userSpaceOnUse"><rect width="2" height="2" fill="#fff"/><rect width="1" height="1" fill="#e4e2d8"/><rect x="1" y="1" width="1" height="1" fill="#e4e2d8"/></pattern></defs><rect x="64" y="660" width="1106" height="17" fill="url(#chk)"/><rect x="64" y="677" width="1106" height="1" fill="#e2e0d8"/><path d="M64 404.5H77.5V385.5H150.5V369.5H223.5V449.5H296.5V546.5H369.5V409.5H441.5V379.5H514.5V384.5H587.5V451.5H660.5V411.5H733.5V447.5H805.5V376.5H878.5V384.5H951.5V458.5H1024.5V564.5H1097.5V660.5H1170" stroke="#bf3636" stroke-width="1" fill="none" shape-rendering="crispEdges"/><path d="M64 441.5H77.5V429.5H150.5V404.5H223.5V401.5H296.5V483.5H369.5V469.5H441.5V479.5H514.5V410.5H587.5V476.5H660.5V469.5H733.5V498.5H805.5V452.5H878.5V421.5H951.5V485.5H1024.5V600.5H1097.5V660.5H1170" stroke="#cc4ccc" stroke-width="1" fill="none" shape-rendering="crispEdges"/><rect x="62" y="138" width="3" height="1" fill="#000"/><rect x="62" y="398" width="3" height="1" fill="#000"/><rect x="62" y="658" width="3" height="1" fill="#000"/></svg>
<div style="position:absolute;left:65px;top:661px;width:18px;height:16px;background:#ECE9D8;border-top:1px solid #fff;border-left:1px solid #fff;border-right:1px solid #808080;border-bottom:1px solid #808080;box-shadow:inset -1px -1px #aca899;"></div>
<svg style="left:65px;top:661px" width="18" height="16"><path d="M10 4V12L6 8Z" fill="#000"/></svg>
<div style="position:absolute;left:1136px;top:661px;width:17px;height:16px;background:#ECE9D8;border-top:1px solid #fff;border-left:1px solid #fff;border-right:1px solid #808080;border-bottom:1px solid #808080;box-shadow:inset -1px -1px #aca899;"></div>
<div style="position:absolute;left:1152px;top:661px;width:18px;height:16px;background:#ECE9D8;border-top:1px solid #fff;border-left:1px solid #fff;border-right:1px solid #808080;border-bottom:1px solid #808080;box-shadow:inset -1px -1px #aca899;"></div>
<svg style="left:1152px;top:661px" width="18" height="16"><path d="M7 4V12L11 8Z" fill="#000"/></svg>
<div style="position:absolute;left:74px;top:677px;width:1px;height:3px;background:#000;"></div>
<div style="position:absolute;left:44px;top:681px;white-space:nowrap;font-size:12px;line-height:14px;width:61px;text-align:center;">700</div>
<div style="position:absolute;left:116px;top:677px;width:1px;height:3px;background:#000;"></div>
<div style="position:absolute;left:86px;top:681px;white-space:nowrap;font-size:12px;line-height:14px;width:61px;text-align:center;">800</div>
<div style="position:absolute;left:153px;top:677px;width:1px;height:3px;background:#000;"></div>
<div style="position:absolute;left:123px;top:681px;white-space:nowrap;font-size:12px;line-height:14px;width:61px;text-align:center;">900</div>
<div style="position:absolute;left:186px;top:677px;width:1px;height:3px;background:#000;"></div>
<div style="position:absolute;left:156px;top:681px;white-space:nowrap;font-size:12px;line-height:14px;width:61px;text-align:center;">1.0k</div>
<div style="position:absolute;left:406px;top:677px;width:1px;height:3px;background:#000;"></div>
<div style="position:absolute;left:376px;top:681px;white-space:nowrap;font-size:12px;line-height:14px;width:61px;text-align:center;">2.0k</div>
<div style="position:absolute;left:534px;top:677px;width:1px;height:3px;background:#000;"></div>
<div style="position:absolute;left:504px;top:681px;white-space:nowrap;font-size:12px;line-height:14px;width:61px;text-align:center;">3.0k</div>
<div style="position:absolute;left:625px;top:677px;width:1px;height:3px;background:#000;"></div>
<div style="position:absolute;left:595px;top:681px;white-space:nowrap;font-size:12px;line-height:14px;width:61px;text-align:center;">4.0k</div>
<div style="position:absolute;left:695px;top:677px;width:1px;height:3px;background:#000;"></div>
<div style="position:absolute;left:665px;top:681px;white-space:nowrap;font-size:12px;line-height:14px;width:61px;text-align:center;">5.0k</div>
<div style="position:absolute;left:753px;top:677px;width:1px;height:3px;background:#000;"></div>
<div style="position:absolute;left:723px;top:681px;white-space:nowrap;font-size:12px;line-height:14px;width:61px;text-align:center;">6.0k</div>
<div style="position:absolute;left:802px;top:677px;width:1px;height:3px;background:#000;"></div>
<div style="position:absolute;left:772px;top:681px;white-space:nowrap;font-size:12px;line-height:14px;width:61px;text-align:center;">7.0k</div>
<div style="position:absolute;left:844px;top:677px;width:1px;height:3px;background:#000;"></div>
<div style="position:absolute;left:814px;top:681px;white-space:nowrap;font-size:12px;line-height:14px;width:61px;text-align:center;">8.0k</div>
<div style="position:absolute;left:881px;top:677px;width:1px;height:3px;background:#000;"></div>
<div style="position:absolute;left:851px;top:681px;white-space:nowrap;font-size:12px;line-height:14px;width:61px;text-align:center;">9.0k</div>
<div style="position:absolute;left:915px;top:677px;width:1px;height:3px;background:#000;"></div>
<div style="position:absolute;left:885px;top:681px;white-space:nowrap;font-size:12px;line-height:14px;width:61px;text-align:center;">10.0k</div>
<div style="position:absolute;left:1134px;top:677px;width:1px;height:3px;background:#000;"></div>
<div style="position:absolute;left:1104px;top:681px;white-space:nowrap;font-size:12px;line-height:14px;width:61px;text-align:center;">20.0k</div>
<div style="position:absolute;left:599px;top:693px;white-space:nowrap;font-size:12px;line-height:14px;letter-spacing:-0.15px;">Frequency (Hz)</div>
<div style="position:absolute;left:0px;top:132px;white-space:nowrap;font-size:12px;line-height:14px;width:60px;text-align:right;">-45.0</div>
<div style="position:absolute;left:0px;top:392px;white-space:nowrap;font-size:12px;line-height:14px;width:60px;text-align:right;">-55.0</div>
<div style="position:absolute;left:0px;top:652px;white-space:nowrap;font-size:12px;line-height:14px;width:60px;text-align:right;">-65.0</div>
<div style="position:absolute;left:10px;top:476px;width:150px;height:16px;transform-origin:0 0;transform:rotate(-90deg) scaleX(0.955);font-size:14px;line-height:16px;white-space:nowrap;">Relative Amplitude (dB)</div>
<div style="position:absolute;left:5px;top:707px;width:1270px;height:1px;background:#000;"></div>
<div style="position:absolute;left:9px;top:711px;width:119px;height:17px;border-top:1px solid #aca899;border-left:1px solid #aca899;"></div>
<div style="position:absolute;left:13px;top:713px;white-space:nowrap;font-size:12px;line-height:14px;">Stopped</div>
<div style="position:absolute;left:129px;top:711px;width:101px;height:17px;border-top:1px solid #aca899;border-left:1px solid #aca899;"></div>
<div style="position:absolute;left:133px;top:713px;white-space:nowrap;font-size:12px;line-height:14px;">Real Time</div>
<div style="position:absolute;left:232px;top:711px;width:72px;height:17px;border-top:1px solid #aca899;border-left:1px solid #aca899;"></div>
<div style="position:absolute;left:236px;top:713px;white-space:nowrap;font-size:12px;line-height:14px;">44100 Hz</div>
<div style="position:absolute;left:305px;top:711px;width:52px;height:17px;border-top:1px solid #aca899;border-left:1px solid #aca899;"></div>
<div style="position:absolute;left:309px;top:713px;white-space:nowrap;font-size:12px;line-height:14px;">16 Bit</div>
<div style="position:absolute;left:358px;top:711px;width:62px;height:17px;border-top:1px solid #aca899;border-left:1px solid #aca899;"></div>
<div style="position:absolute;left:362px;top:713px;white-space:nowrap;font-size:12px;line-height:14px;">Mono</div>
<div style="position:absolute;left:421px;top:711px;width:102px;height:17px;border-top:1px solid #aca899;border-left:1px solid #aca899;"></div>
<div style="position:absolute;left:425px;top:713px;white-space:nowrap;font-size:12px;line-height:14px;">FFT: 16384 pts</div>
<div style="position:absolute;left:524px;top:711px;width:74px;height:17px;border-top:1px solid #aca899;border-left:1px solid #aca899;"></div>
<div style="position:absolute;left:528px;top:713px;white-space:nowrap;font-size:12px;line-height:14px;">Hanning</div>
<div style="position:absolute;left:812px;top:32px;width:464px;height:318px;background:#0831d9;border-radius:8px 8px 0 0;"></div>
<div style="position:absolute;left:812px;top:32px;width:464px;height:29px;border-radius:8px 8px 0 0;background:linear-gradient(#0a3cb0 0px,#2a78e8 1px,#3d95ff 2px,#2a82f8 3px,#0a5eec 5px,#0056e6 8px,#0054e2 18px,#005cee 21px,#0064f6 25px,#0056dc 27px,#003ca8 28px,#003ca8 29px);"></div>
<div style="position:absolute;left:812px;top:61px;width:3px;height:289px;background:linear-gradient(90deg,#1a50d8,#2a62e8 1px,#3a74f4 3px);"></div>
<div style="position:absolute;left:1273px;top:61px;width:3px;height:289px;background:linear-gradient(90deg,#0840c0,#0028a0 2px,#001c88 3px);"></div>
<div style="position:absolute;left:812px;top:347px;width:464px;height:3px;background:linear-gradient(#1a44c8,#0a2ca8 2px,#08229a 3px);"></div>
<div style="position:absolute;left:815px;top:61px;width:458px;height:286px;background:#ECE9D8;border-top:1px solid #dce6f6;border-left:1px solid #c8daf8;border-bottom:1px solid #d8e4f6;"></div>
<div style="position:absolute;left:818px;top:40px;white-space:nowrap;font-size:14px;line-height:18px;font-weight:bold;color:#fff;transform:scaleX(0.92);transform-origin:0 0;text-shadow:1px 1px #0a1e80;">Scaling Control</div>
<div style="position:absolute;left:1250px;top:37px;width:21px;height:21px;border:1px solid #fff;border-radius:3px;background:linear-gradient(135deg,#f0a080,#e05a30 45%,#c84018);"></div>
<svg style="left:1250px;top:37px" width="21" height="21"><path d="M6 6L15 15M15 6L6 15" stroke="#fff" stroke-width="2.2"/></svg>
<div style="position:absolute;left:824px;top:73px;width:150px;height:100px;border:1px solid #fff;"></div><div style="position:absolute;left:823px;top:72px;width:150px;height:100px;border:1px solid #aca899;"></div><div style="position:absolute;left:830px;top:65px;width:72px;height:14px;background:#ECE9D8;"></div><div style="position:absolute;left:832px;top:67px;white-space:nowrap;font-size:11px;line-height:13px;letter-spacing:-0.2px;">Amplitude Axis</div>
<svg style="left:868px;top:92px" width="12" height="12" shape-rendering="crispEdges"><circle cx="6" cy="6" r="5" fill="#fff"/><rect x="4" y="0" width="1" height="1" fill="#aca899"/><rect x="5" y="0" width="1" height="1" fill="#aca899"/><rect x="6" y="0" width="1" height="1" fill="#aca899"/><rect x="7" y="0" width="1" height="1" fill="#aca899"/><rect x="2" y="1" width="1" height="1" fill="#aca899"/><rect x="3" y="1" width="1" height="1" fill="#aca899"/><rect x="8" y="1" width="1" height="1" fill="#aca899"/><rect x="9" y="1" width="1" height="1" fill="#aca899"/><rect x="1" y="2" width="1" height="1" fill="#aca899"/><rect x="10" y="2" width="1" height="1" fill="#ffffff"/><rect x="1" y="3" width="1" height="1" fill="#aca899"/><rect x="10" y="3" width="1" height="1" fill="#ffffff"/><rect x="0" y="4" width="1" height="1" fill="#aca899"/><rect x="11" y="4" width="1" height="1" fill="#ffffff"/><rect x="0" y="5" width="1" height="1" fill="#aca899"/><rect x="11" y="5" width="1" height="1" fill="#ffffff"/><rect x="0" y="6" width="1" height="1" fill="#aca899"/><rect x="11" y="6" width="1" height="1" fill="#ffffff"/><rect x="0" y="7" width="1" height="1" fill="#aca899"/><rect x="11" y="7" width="1" height="1" fill="#ffffff"/><rect x="1" y="8" width="1" height="1" fill="#aca899"/><rect x="10" y="8" width="1" height="1" fill="#ffffff"/><rect x="1" y="9" width="1" height="1" fill="#aca899"/><rect x="10" y="9" width="1" height="1" fill="#ffffff"/><rect x="2" y="10" width="1" height="1" fill="#ffffff"/><rect x="3" y="10" width="1" height="1" fill="#ffffff"/><rect x="8" y="10" width="1" height="1" fill="#ffffff"/><rect x="9" y="10" width="1" height="1" fill="#ffffff"/><rect x="4" y="11" width="1" height="1" fill="#ffffff"/><rect x="5" y="11" width="1" height="1" fill="#ffffff"/><rect x="6" y="11" width="1" height="1" fill="#ffffff"/><rect x="7" y="11" width="1" height="1" fill="#ffffff"/><rect x="4" y="1" width="1" height="1" fill="#716f64"/><rect x="5" y="1" width="1" height="1" fill="#716f64"/><rect x="6" y="1" width="1" height="1" fill="#716f64"/><rect x="7" y="1" width="1" height="1" fill="#716f64"/><rect x="2" y="2" width="1" height="1" fill="#716f64"/><rect x="3" y="2" width="1" height="1" fill="#716f64"/><rect x="8" y="2" width="1" height="1" fill="#716f64"/><rect x="9" y="2" width="1" height="1" fill="#716f64"/><rect x="2" y="3" width="1" height="1" fill="#716f64"/><rect x="9" y="3" width="1" height="1" fill="#f1efe2"/><rect x="1" y="4" width="1" height="1" fill="#716f64"/><rect x="10" y="4" width="1" height="1" fill="#f1efe2"/><rect x="1" y="5" width="1" height="1" fill="#716f64"/><rect x="10" y="5" width="1" height="1" fill="#f1efe2"/><rect x="1" y="6" width="1" height="1" fill="#716f64"/><rect x="10" y="6" width="1" height="1" fill="#f1efe2"/><rect x="1" y="7" width="1" height="1" fill="#716f64"/><rect x="10" y="7" width="1" height="1" fill="#f1efe2"/><rect x="2" y="8" width="1" height="1" fill="#716f64"/><rect x="9" y="8" width="1" height="1" fill="#f1efe2"/><rect x="2" y="9" width="1" height="1" fill="#f1efe2"/><rect x="3" y="9" width="1" height="1" fill="#f1efe2"/><rect x="8" y="9" width="1" height="1" fill="#f1efe2"/><rect x="9" y="9" width="1" height="1" fill="#f1efe2"/><rect x="4" y="10" width="1" height="1" fill="#f1efe2"/><rect x="5" y="10" width="1" height="1" fill="#f1efe2"/><rect x="6" y="10" width="1" height="1" fill="#f1efe2"/><rect x="7" y="10" width="1" height="1" fill="#f1efe2"/></svg>
<div style="position:absolute;left:883px;top:93px;white-space:nowrap;font-size:11px;line-height:13px;letter-spacing:-0.2px;">Linear</div>
<svg style="left:868px;top:116px" width="12" height="12" shape-rendering="crispEdges"><circle cx="6" cy="6" r="5" fill="#fff"/><rect x="4" y="0" width="1" height="1" fill="#aca899"/><rect x="5" y="0" width="1" height="1" fill="#aca899"/><rect x="6" y="0" width="1" height="1" fill="#aca899"/><rect x="7" y="0" width="1" height="1" fill="#aca899"/><rect x="2" y="1" width="1" height="1" fill="#aca899"/><rect x="3" y="1" width="1" height="1" fill="#aca899"/><rect x="8" y="1" width="1" height="1" fill="#aca899"/><rect x="9" y="1" width="1" height="1" fill="#aca899"/><rect x="1" y="2" width="1" height="1" fill="#aca899"/><rect x="10" y="2" width="1" height="1" fill="#ffffff"/><rect x="1" y="3" width="1" height="1" fill="#aca899"/><rect x="10" y="3" width="1" height="1" fill="#ffffff"/><rect x="0" y="4" width="1" height="1" fill="#aca899"/><rect x="11" y="4" width="1" height="1" fill="#ffffff"/><rect x="0" y="5" width="1" height="1" fill="#aca899"/><rect x="11" y="5" width="1" height="1" fill="#ffffff"/><rect x="0" y="6" width="1" height="1" fill="#aca899"/><rect x="11" y="6" width="1" height="1" fill="#ffffff"/><rect x="0" y="7" width="1" height="1" fill="#aca899"/><rect x="11" y="7" width="1" height="1" fill="#ffffff"/><rect x="1" y="8" width="1" height="1" fill="#aca899"/><rect x="10" y="8" width="1" height="1" fill="#ffffff"/><rect x="1" y="9" width="1" height="1" fill="#aca899"/><rect x="10" y="9" width="1" height="1" fill="#ffffff"/><rect x="2" y="10" width="1" height="1" fill="#ffffff"/><rect x="3" y="10" width="1" height="1" fill="#ffffff"/><rect x="8" y="10" width="1" height="1" fill="#ffffff"/><rect x="9" y="10" width="1" height="1" fill="#ffffff"/><rect x="4" y="11" width="1" height="1" fill="#ffffff"/><rect x="5" y="11" width="1" height="1" fill="#ffffff"/><rect x="6" y="11" width="1" height="1" fill="#ffffff"/><rect x="7" y="11" width="1" height="1" fill="#ffffff"/><rect x="4" y="1" width="1" height="1" fill="#716f64"/><rect x="5" y="1" width="1" height="1" fill="#716f64"/><rect x="6" y="1" width="1" height="1" fill="#716f64"/><rect x="7" y="1" width="1" height="1" fill="#716f64"/><rect x="2" y="2" width="1" height="1" fill="#716f64"/><rect x="3" y="2" width="1" height="1" fill="#716f64"/><rect x="8" y="2" width="1" height="1" fill="#716f64"/><rect x="9" y="2" width="1" height="1" fill="#716f64"/><rect x="2" y="3" width="1" height="1" fill="#716f64"/><rect x="9" y="3" width="1" height="1" fill="#f1efe2"/><rect x="1" y="4" width="1" height="1" fill="#716f64"/><rect x="10" y="4" width="1" height="1" fill="#f1efe2"/><rect x="1" y="5" width="1" height="1" fill="#716f64"/><rect x="10" y="5" width="1" height="1" fill="#f1efe2"/><rect x="1" y="6" width="1" height="1" fill="#716f64"/><rect x="10" y="6" width="1" height="1" fill="#f1efe2"/><rect x="1" y="7" width="1" height="1" fill="#716f64"/><rect x="10" y="7" width="1" height="1" fill="#f1efe2"/><rect x="2" y="8" width="1" height="1" fill="#716f64"/><rect x="9" y="8" width="1" height="1" fill="#f1efe2"/><rect x="2" y="9" width="1" height="1" fill="#f1efe2"/><rect x="3" y="9" width="1" height="1" fill="#f1efe2"/><rect x="8" y="9" width="1" height="1" fill="#f1efe2"/><rect x="9" y="9" width="1" height="1" fill="#f1efe2"/><rect x="4" y="10" width="1" height="1" fill="#f1efe2"/><rect x="5" y="10" width="1" height="1" fill="#f1efe2"/><rect x="6" y="10" width="1" height="1" fill="#f1efe2"/><rect x="7" y="10" width="1" height="1" fill="#f1efe2"/><rect x="5" y="4" width="2" height="4" fill="#000"/><rect x="4" y="5" width="4" height="2" fill="#000"/></svg>
<div style="position:absolute;left:883px;top:117px;white-space:nowrap;font-size:11px;line-height:13px;letter-spacing:-0.2px;">Logarithmic</div>
<div style="position:absolute;left:836px;top:145px;width:13px;height:13px;background:#fff;border-top:1px solid #aca899;border-left:1px solid #aca899;border-right:1px solid #fff;border-bottom:1px solid #fff;box-shadow:inset 1px 1px #716f64, inset -1px -1px #f1efe2;"></div>
<div style="position:absolute;left:851px;top:145px;white-space:nowrap;font-size:11px;line-height:13px;letter-spacing:-0.25px;">Power Spectral Density</div>
<div style="position:absolute;left:983px;top:73px;width:201px;height:100px;border:1px solid #fff;"></div><div style="position:absolute;left:982px;top:72px;width:201px;height:100px;border:1px solid #aca899;"></div><div style="position:absolute;left:989px;top:65px;width:77px;height:14px;background:#ECE9D8;"></div><div style="position:absolute;left:991px;top:67px;white-space:nowrap;font-size:11px;line-height:13px;letter-spacing:-0.2px;">Frequency Axis</div>
<div style="position:absolute;left:991px;top:86px;white-space:nowrap;font-size:11px;line-height:13px;letter-spacing:-0.2px;">Narrowband:</div>
<div style="position:absolute;left:1075px;top:86px;white-space:nowrap;font-size:11px;line-height:13px;letter-spacing:-0.2px;">Octave:</div>
<svg style="left:998px;top:107px" width="12" height="12" shape-rendering="crispEdges"><circle cx="6" cy="6" r="5" fill="#fff"/><rect x="4" y="0" width="1" height="1" fill="#aca899"/><rect x="5" y="0" width="1" height="1" fill="#aca899"/><rect x="6" y="0" width="1" height="1" fill="#aca899"/><rect x="7" y="0" width="1" height="1" fill="#aca899"/><rect x="2" y="1" width="1" height="1" fill="#aca899"/><rect x="3" y="1" width="1" height="1" fill="#aca899"/><rect x="8" y="1" width="1" height="1" fill="#aca899"/><rect x="9" y="1" width="1" height="1" fill="#aca899"/><rect x="1" y="2" width="1" height="1" fill="#aca899"/><rect x="10" y="2" width="1" height="1" fill="#ffffff"/><rect x="1" y="3" width="1" height="1" fill="#aca899"/><rect x="10" y="3" width="1" height="1" fill="#ffffff"/><rect x="0" y="4" width="1" height="1" fill="#aca899"/><rect x="11" y="4" width="1" height="1" fill="#ffffff"/><rect x="0" y="5" width="1" height="1" fill="#aca899"/><rect x="11" y="5" width="1" height="1" fill="#ffffff"/><rect x="0" y="6" width="1" height="1" fill="#aca899"/><rect x="11" y="6" width="1" height="1" fill="#ffffff"/><rect x="0" y="7" width="1" height="1" fill="#aca899"/><rect x="11" y="7" width="1" height="1" fill="#ffffff"/><rect x="1" y="8" width="1" height="1" fill="#aca899"/><rect x="10" y="8" width="1" height="1" fill="#ffffff"/><rect x="1" y="9" width="1" height="1" fill="#aca899"/><rect x="10" y="9" width="1" height="1" fill="#ffffff"/><rect x="2" y="10" width="1" height="1" fill="#ffffff"/><rect x="3" y="10" width="1" height="1" fill="#ffffff"/><rect x="8" y="10" width="1" height="1" fill="#ffffff"/><rect x="9" y="10" width="1" height="1" fill="#ffffff"/><rect x="4" y="11" width="1" height="1" fill="#ffffff"/><rect x="5" y="11" width="1" height="1" fill="#ffffff"/><rect x="6" y="11" width="1" height="1" fill="#ffffff"/><rect x="7" y="11" width="1" height="1" fill="#ffffff"/><rect x="4" y="1" width="1" height="1" fill="#716f64"/><rect x="5" y="1" width="1" height="1" fill="#716f64"/><rect x="6" y="1" width="1" height="1" fill="#716f64"/><rect x="7" y="1" width="1" height="1" fill="#716f64"/><rect x="2" y="2" width="1" height="1" fill="#716f64"/><rect x="3" y="2" width="1" height="1" fill="#716f64"/><rect x="8" y="2" width="1" height="1" fill="#716f64"/><rect x="9" y="2" width="1" height="1" fill="#716f64"/><rect x="2" y="3" width="1" height="1" fill="#716f64"/><rect x="9" y="3" width="1" height="1" fill="#f1efe2"/><rect x="1" y="4" width="1" height="1" fill="#716f64"/><rect x="10" y="4" width="1" height="1" fill="#f1efe2"/><rect x="1" y="5" width="1" height="1" fill="#716f64"/><rect x="10" y="5" width="1" height="1" fill="#f1efe2"/><rect x="1" y="6" width="1" height="1" fill="#716f64"/><rect x="10" y="6" width="1" height="1" fill="#f1efe2"/><rect x="1" y="7" width="1" height="1" fill="#716f64"/><rect x="10" y="7" width="1" height="1" fill="#f1efe2"/><rect x="2" y="8" width="1" height="1" fill="#716f64"/><rect x="9" y="8" width="1" height="1" fill="#f1efe2"/><rect x="2" y="9" width="1" height="1" fill="#f1efe2"/><rect x="3" y="9" width="1" height="1" fill="#f1efe2"/><rect x="8" y="9" width="1" height="1" fill="#f1efe2"/><rect x="9" y="9" width="1" height="1" fill="#f1efe2"/><rect x="4" y="10" width="1" height="1" fill="#f1efe2"/><rect x="5" y="10" width="1" height="1" fill="#f1efe2"/><rect x="6" y="10" width="1" height="1" fill="#f1efe2"/><rect x="7" y="10" width="1" height="1" fill="#f1efe2"/></svg>
<div style="position:absolute;left:1012px;top:107px;white-space:nowrap;font-size:11px;line-height:13px;letter-spacing:-0.2px;">Linear</div>
<svg style="left:998px;top:130px" width="12" height="12" shape-rendering="crispEdges"><circle cx="6" cy="6" r="5" fill="#fff"/><rect x="4" y="0" width="1" height="1" fill="#aca899"/><rect x="5" y="0" width="1" height="1" fill="#aca899"/><rect x="6" y="0" width="1" height="1" fill="#aca899"/><rect x="7" y="0" width="1" height="1" fill="#aca899"/><rect x="2" y="1" width="1" height="1" fill="#aca899"/><rect x="3" y="1" width="1" height="1" fill="#aca899"/><rect x="8" y="1" width="1" height="1" fill="#aca899"/><rect x="9" y="1" width="1" height="1" fill="#aca899"/><rect x="1" y="2" width="1" height="1" fill="#aca899"/><rect x="10" y="2" width="1" height="1" fill="#ffffff"/><rect x="1" y="3" width="1" height="1" fill="#aca899"/><rect x="10" y="3" width="1" height="1" fill="#ffffff"/><rect x="0" y="4" width="1" height="1" fill="#aca899"/><rect x="11" y="4" width="1" height="1" fill="#ffffff"/><rect x="0" y="5" width="1" height="1" fill="#aca899"/><rect x="11" y="5" width="1" height="1" fill="#ffffff"/><rect x="0" y="6" width="1" height="1" fill="#aca899"/><rect x="11" y="6" width="1" height="1" fill="#ffffff"/><rect x="0" y="7" width="1" height="1" fill="#aca899"/><rect x="11" y="7" width="1" height="1" fill="#ffffff"/><rect x="1" y="8" width="1" height="1" fill="#aca899"/><rect x="10" y="8" width="1" height="1" fill="#ffffff"/><rect x="1" y="9" width="1" height="1" fill="#aca899"/><rect x="10" y="9" width="1" height="1" fill="#ffffff"/><rect x="2" y="10" width="1" height="1" fill="#ffffff"/><rect x="3" y="10" width="1" height="1" fill="#ffffff"/><rect x="8" y="10" width="1" height="1" fill="#ffffff"/><rect x="9" y="10" width="1" height="1" fill="#ffffff"/><rect x="4" y="11" width="1" height="1" fill="#ffffff"/><rect x="5" y="11" width="1" height="1" fill="#ffffff"/><rect x="6" y="11" width="1" height="1" fill="#ffffff"/><rect x="7" y="11" width="1" height="1" fill="#ffffff"/><rect x="4" y="1" width="1" height="1" fill="#716f64"/><rect x="5" y="1" width="1" height="1" fill="#716f64"/><rect x="6" y="1" width="1" height="1" fill="#716f64"/><rect x="7" y="1" width="1" height="1" fill="#716f64"/><rect x="2" y="2" width="1" height="1" fill="#716f64"/><rect x="3" y="2" width="1" height="1" fill="#716f64"/><rect x="8" y="2" width="1" height="1" fill="#716f64"/><rect x="9" y="2" width="1" height="1" fill="#716f64"/><rect x="2" y="3" width="1" height="1" fill="#716f64"/><rect x="9" y="3" width="1" height="1" fill="#f1efe2"/><rect x="1" y="4" width="1" height="1" fill="#716f64"/><rect x="10" y="4" width="1" height="1" fill="#f1efe2"/><rect x="1" y="5" width="1" height="1" fill="#716f64"/><rect x="10" y="5" width="1" height="1" fill="#f1efe2"/><rect x="1" y="6" width="1" height="1" fill="#716f64"/><rect x="10" y="6" width="1" height="1" fill="#f1efe2"/><rect x="1" y="7" width="1" height="1" fill="#716f64"/><rect x="10" y="7" width="1" height="1" fill="#f1efe2"/><rect x="2" y="8" width="1" height="1" fill="#716f64"/><rect x="9" y="8" width="1" height="1" fill="#f1efe2"/><rect x="2" y="9" width="1" height="1" fill="#f1efe2"/><rect x="3" y="9" width="1" height="1" fill="#f1efe2"/><rect x="8" y="9" width="1" height="1" fill="#f1efe2"/><rect x="9" y="9" width="1" height="1" fill="#f1efe2"/><rect x="4" y="10" width="1" height="1" fill="#f1efe2"/><rect x="5" y="10" width="1" height="1" fill="#f1efe2"/><rect x="6" y="10" width="1" height="1" fill="#f1efe2"/><rect x="7" y="10" width="1" height="1" fill="#f1efe2"/></svg>
<div style="position:absolute;left:1012px;top:130px;white-space:nowrap;font-size:11px;line-height:13px;letter-spacing:-0.2px;">Logarithmic</div>
<svg style="left:1086px;top:107px" width="12" height="12" shape-rendering="crispEdges"><circle cx="6" cy="6" r="5" fill="#fff"/><rect x="4" y="0" width="1" height="1" fill="#aca899"/><rect x="5" y="0" width="1" height="1" fill="#aca899"/><rect x="6" y="0" width="1" height="1" fill="#aca899"/><rect x="7" y="0" width="1" height="1" fill="#aca899"/><rect x="2" y="1" width="1" height="1" fill="#aca899"/><rect x="3" y="1" width="1" height="1" fill="#aca899"/><rect x="8" y="1" width="1" height="1" fill="#aca899"/><rect x="9" y="1" width="1" height="1" fill="#aca899"/><rect x="1" y="2" width="1" height="1" fill="#aca899"/><rect x="10" y="2" width="1" height="1" fill="#ffffff"/><rect x="1" y="3" width="1" height="1" fill="#aca899"/><rect x="10" y="3" width="1" height="1" fill="#ffffff"/><rect x="0" y="4" width="1" height="1" fill="#aca899"/><rect x="11" y="4" width="1" height="1" fill="#ffffff"/><rect x="0" y="5" width="1" height="1" fill="#aca899"/><rect x="11" y="5" width="1" height="1" fill="#ffffff"/><rect x="0" y="6" width="1" height="1" fill="#aca899"/><rect x="11" y="6" width="1" height="1" fill="#ffffff"/><rect x="0" y="7" width="1" height="1" fill="#aca899"/><rect x="11" y="7" width="1" height="1" fill="#ffffff"/><rect x="1" y="8" width="1" height="1" fill="#aca899"/><rect x="10" y="8" width="1" height="1" fill="#ffffff"/><rect x="1" y="9" width="1" height="1" fill="#aca899"/><rect x="10" y="9" width="1" height="1" fill="#ffffff"/><rect x="2" y="10" width="1" height="1" fill="#ffffff"/><rect x="3" y="10" width="1" height="1" fill="#ffffff"/><rect x="8" y="10" width="1" height="1" fill="#ffffff"/><rect x="9" y="10" width="1" height="1" fill="#ffffff"/><rect x="4" y="11" width="1" height="1" fill="#ffffff"/><rect x="5" y="11" width="1" height="1" fill="#ffffff"/><rect x="6" y="11" width="1" height="1" fill="#ffffff"/><rect x="7" y="11" width="1" height="1" fill="#ffffff"/><rect x="4" y="1" width="1" height="1" fill="#716f64"/><rect x="5" y="1" width="1" height="1" fill="#716f64"/><rect x="6" y="1" width="1" height="1" fill="#716f64"/><rect x="7" y="1" width="1" height="1" fill="#716f64"/><rect x="2" y="2" width="1" height="1" fill="#716f64"/><rect x="3" y="2" width="1" height="1" fill="#716f64"/><rect x="8" y="2" width="1" height="1" fill="#716f64"/><rect x="9" y="2" width="1" height="1" fill="#716f64"/><rect x="2" y="3" width="1" height="1" fill="#716f64"/><rect x="9" y="3" width="1" height="1" fill="#f1efe2"/><rect x="1" y="4" width="1" height="1" fill="#716f64"/><rect x="10" y="4" width="1" height="1" fill="#f1efe2"/><rect x="1" y="5" width="1" height="1" fill="#716f64"/><rect x="10" y="5" width="1" height="1" fill="#f1efe2"/><rect x="1" y="6" width="1" height="1" fill="#716f64"/><rect x="10" y="6" width="1" height="1" fill="#f1efe2"/><rect x="1" y="7" width="1" height="1" fill="#716f64"/><rect x="10" y="7" width="1" height="1" fill="#f1efe2"/><rect x="2" y="8" width="1" height="1" fill="#716f64"/><rect x="9" y="8" width="1" height="1" fill="#f1efe2"/><rect x="2" y="9" width="1" height="1" fill="#f1efe2"/><rect x="3" y="9" width="1" height="1" fill="#f1efe2"/><rect x="8" y="9" width="1" height="1" fill="#f1efe2"/><rect x="9" y="9" width="1" height="1" fill="#f1efe2"/><rect x="4" y="10" width="1" height="1" fill="#f1efe2"/><rect x="5" y="10" width="1" height="1" fill="#f1efe2"/><rect x="6" y="10" width="1" height="1" fill="#f1efe2"/><rect x="7" y="10" width="1" height="1" fill="#f1efe2"/></svg>
<div style="position:absolute;left:1100px;top:107px;white-space:nowrap;font-size:11px;line-height:13px;letter-spacing:-0.2px;">1/1</div>
<svg style="left:1086px;top:130px" width="12" height="12" shape-rendering="crispEdges"><circle cx="6" cy="6" r="5" fill="#fff"/><rect x="4" y="0" width="1" height="1" fill="#aca899"/><rect x="5" y="0" width="1" height="1" fill="#aca899"/><rect x="6" y="0" width="1" height="1" fill="#aca899"/><rect x="7" y="0" width="1" height="1" fill="#aca899"/><rect x="2" y="1" width="1" height="1" fill="#aca899"/><rect x="3" y="1" width="1" height="1" fill="#aca899"/><rect x="8" y="1" width="1" height="1" fill="#aca899"/><rect x="9" y="1" width="1" height="1" fill="#aca899"/><rect x="1" y="2" width="1" height="1" fill="#aca899"/><rect x="10" y="2" width="1" height="1" fill="#ffffff"/><rect x="1" y="3" width="1" height="1" fill="#aca899"/><rect x="10" y="3" width="1" height="1" fill="#ffffff"/><rect x="0" y="4" width="1" height="1" fill="#aca899"/><rect x="11" y="4" width="1" height="1" fill="#ffffff"/><rect x="0" y="5" width="1" height="1" fill="#aca899"/><rect x="11" y="5" width="1" height="1" fill="#ffffff"/><rect x="0" y="6" width="1" height="1" fill="#aca899"/><rect x="11" y="6" width="1" height="1" fill="#ffffff"/><rect x="0" y="7" width="1" height="1" fill="#aca899"/><rect x="11" y="7" width="1" height="1" fill="#ffffff"/><rect x="1" y="8" width="1" height="1" fill="#aca899"/><rect x="10" y="8" width="1" height="1" fill="#ffffff"/><rect x="1" y="9" width="1" height="1" fill="#aca899"/><rect x="10" y="9" width="1" height="1" fill="#ffffff"/><rect x="2" y="10" width="1" height="1" fill="#ffffff"/><rect x="3" y="10" width="1" height="1" fill="#ffffff"/><rect x="8" y="10" width="1" height="1" fill="#ffffff"/><rect x="9" y="10" width="1" height="1" fill="#ffffff"/><rect x="4" y="11" width="1" height="1" fill="#ffffff"/><rect x="5" y="11" width="1" height="1" fill="#ffffff"/><rect x="6" y="11" width="1" height="1" fill="#ffffff"/><rect x="7" y="11" width="1" height="1" fill="#ffffff"/><rect x="4" y="1" width="1" height="1" fill="#716f64"/><rect x="5" y="1" width="1" height="1" fill="#716f64"/><rect x="6" y="1" width="1" height="1" fill="#716f64"/><rect x="7" y="1" width="1" height="1" fill="#716f64"/><rect x="2" y="2" width="1" height="1" fill="#716f64"/><rect x="3" y="2" width="1" height="1" fill="#716f64"/><rect x="8" y="2" width="1" height="1" fill="#716f64"/><rect x="9" y="2" width="1" height="1" fill="#716f64"/><rect x="2" y="3" width="1" height="1" fill="#716f64"/><rect x="9" y="3" width="1" height="1" fill="#f1efe2"/><rect x="1" y="4" width="1" height="1" fill="#716f64"/><rect x="10" y="4" width="1" height="1" fill="#f1efe2"/><rect x="1" y="5" width="1" height="1" fill="#716f64"/><rect x="10" y="5" width="1" height="1" fill="#f1efe2"/><rect x="1" y="6" width="1" height="1" fill="#716f64"/><rect x="10" y="6" width="1" height="1" fill="#f1efe2"/><rect x="1" y="7" width="1" height="1" fill="#716f64"/><rect x="10" y="7" width="1" height="1" fill="#f1efe2"/><rect x="2" y="8" width="1" height="1" fill="#716f64"/><rect x="9" y="8" width="1" height="1" fill="#f1efe2"/><rect x="2" y="9" width="1" height="1" fill="#f1efe2"/><rect x="3" y="9" width="1" height="1" fill="#f1efe2"/><rect x="8" y="9" width="1" height="1" fill="#f1efe2"/><rect x="9" y="9" width="1" height="1" fill="#f1efe2"/><rect x="4" y="10" width="1" height="1" fill="#f1efe2"/><rect x="5" y="10" width="1" height="1" fill="#f1efe2"/><rect x="6" y="10" width="1" height="1" fill="#f1efe2"/><rect x="7" y="10" width="1" height="1" fill="#f1efe2"/><rect x="5" y="4" width="2" height="4" fill="#000"/><rect x="4" y="5" width="4" height="2" fill="#000"/></svg>
<div style="position:absolute;left:1100px;top:130px;white-space:nowrap;font-size:11px;line-height:13px;letter-spacing:-0.2px;">1/3</div>
<svg style="left:1086px;top:153px" width="12" height="12" shape-rendering="crispEdges"><circle cx="6" cy="6" r="5" fill="#fff"/><rect x="4" y="0" width="1" height="1" fill="#aca899"/><rect x="5" y="0" width="1" height="1" fill="#aca899"/><rect x="6" y="0" width="1" height="1" fill="#aca899"/><rect x="7" y="0" width="1" height="1" fill="#aca899"/><rect x="2" y="1" width="1" height="1" fill="#aca899"/><rect x="3" y="1" width="1" height="1" fill="#aca899"/><rect x="8" y="1" width="1" height="1" fill="#aca899"/><rect x="9" y="1" width="1" height="1" fill="#aca899"/><rect x="1" y="2" width="1" height="1" fill="#aca899"/><rect x="10" y="2" width="1" height="1" fill="#ffffff"/><rect x="1" y="3" width="1" height="1" fill="#aca899"/><rect x="10" y="3" width="1" height="1" fill="#ffffff"/><rect x="0" y="4" width="1" height="1" fill="#aca899"/><rect x="11" y="4" width="1" height="1" fill="#ffffff"/><rect x="0" y="5" width="1" height="1" fill="#aca899"/><rect x="11" y="5" width="1" height="1" fill="#ffffff"/><rect x="0" y="6" width="1" height="1" fill="#aca899"/><rect x="11" y="6" width="1" height="1" fill="#ffffff"/><rect x="0" y="7" width="1" height="1" fill="#aca899"/><rect x="11" y="7" width="1" height="1" fill="#ffffff"/><rect x="1" y="8" width="1" height="1" fill="#aca899"/><rect x="10" y="8" width="1" height="1" fill="#ffffff"/><rect x="1" y="9" width="1" height="1" fill="#aca899"/><rect x="10" y="9" width="1" height="1" fill="#ffffff"/><rect x="2" y="10" width="1" height="1" fill="#ffffff"/><rect x="3" y="10" width="1" height="1" fill="#ffffff"/><rect x="8" y="10" width="1" height="1" fill="#ffffff"/><rect x="9" y="10" width="1" height="1" fill="#ffffff"/><rect x="4" y="11" width="1" height="1" fill="#ffffff"/><rect x="5" y="11" width="1" height="1" fill="#ffffff"/><rect x="6" y="11" width="1" height="1" fill="#ffffff"/><rect x="7" y="11" width="1" height="1" fill="#ffffff"/><rect x="4" y="1" width="1" height="1" fill="#716f64"/><rect x="5" y="1" width="1" height="1" fill="#716f64"/><rect x="6" y="1" width="1" height="1" fill="#716f64"/><rect x="7" y="1" width="1" height="1" fill="#716f64"/><rect x="2" y="2" width="1" height="1" fill="#716f64"/><rect x="3" y="2" width="1" height="1" fill="#716f64"/><rect x="8" y="2" width="1" height="1" fill="#716f64"/><rect x="9" y="2" width="1" height="1" fill="#716f64"/><rect x="2" y="3" width="1" height="1" fill="#716f64"/><rect x="9" y="3" width="1" height="1" fill="#f1efe2"/><rect x="1" y="4" width="1" height="1" fill="#716f64"/><rect x="10" y="4" width="1" height="1" fill="#f1efe2"/><rect x="1" y="5" width="1" height="1" fill="#716f64"/><rect x="10" y="5" width="1" height="1" fill="#f1efe2"/><rect x="1" y="6" width="1" height="1" fill="#716f64"/><rect x="10" y="6" width="1" height="1" fill="#f1efe2"/><rect x="1" y="7" width="1" height="1" fill="#716f64"/><rect x="10" y="7" width="1" height="1" fill="#f1efe2"/><rect x="2" y="8" width="1" height="1" fill="#716f64"/><rect x="9" y="8" width="1" height="1" fill="#f1efe2"/><rect x="2" y="9" width="1" height="1" fill="#f1efe2"/><rect x="3" y="9" width="1" height="1" fill="#f1efe2"/><rect x="8" y="9" width="1" height="1" fill="#f1efe2"/><rect x="9" y="9" width="1" height="1" fill="#f1efe2"/><rect x="4" y="10" width="1" height="1" fill="#f1efe2"/><rect x="5" y="10" width="1" height="1" fill="#f1efe2"/><rect x="6" y="10" width="1" height="1" fill="#f1efe2"/><rect x="7" y="10" width="1" height="1" fill="#f1efe2"/></svg>
<div style="position:absolute;left:1100px;top:153px;white-space:nowrap;font-size:11px;line-height:13px;letter-spacing:-0.2px;">1/6</div>
<svg style="left:1136px;top:107px" width="12" height="12" shape-rendering="crispEdges"><circle cx="6" cy="6" r="5" fill="#fff"/><rect x="4" y="0" width="1" height="1" fill="#aca899"/><rect x="5" y="0" width="1" height="1" fill="#aca899"/><rect x="6" y="0" width="1" height="1" fill="#aca899"/><rect x="7" y="0" width="1" height="1" fill="#aca899"/><rect x="2" y="1" width="1" height="1" fill="#aca899"/><rect x="3" y="1" width="1" height="1" fill="#aca899"/><rect x="8" y="1" width="1" height="1" fill="#aca899"/><rect x="9" y="1" width="1" height="1" fill="#aca899"/><rect x="1" y="2" width="1" height="1" fill="#aca899"/><rect x="10" y="2" width="1" height="1" fill="#ffffff"/><rect x="1" y="3" width="1" height="1" fill="#aca899"/><rect x="10" y="3" width="1" height="1" fill="#ffffff"/><rect x="0" y="4" width="1" height="1" fill="#aca899"/><rect x="11" y="4" width="1" height="1" fill="#ffffff"/><rect x="0" y="5" width="1" height="1" fill="#aca899"/><rect x="11" y="5" width="1" height="1" fill="#ffffff"/><rect x="0" y="6" width="1" height="1" fill="#aca899"/><rect x="11" y="6" width="1" height="1" fill="#ffffff"/><rect x="0" y="7" width="1" height="1" fill="#aca899"/><rect x="11" y="7" width="1" height="1" fill="#ffffff"/><rect x="1" y="8" width="1" height="1" fill="#aca899"/><rect x="10" y="8" width="1" height="1" fill="#ffffff"/><rect x="1" y="9" width="1" height="1" fill="#aca899"/><rect x="10" y="9" width="1" height="1" fill="#ffffff"/><rect x="2" y="10" width="1" height="1" fill="#ffffff"/><rect x="3" y="10" width="1" height="1" fill="#ffffff"/><rect x="8" y="10" width="1" height="1" fill="#ffffff"/><rect x="9" y="10" width="1" height="1" fill="#ffffff"/><rect x="4" y="11" width="1" height="1" fill="#ffffff"/><rect x="5" y="11" width="1" height="1" fill="#ffffff"/><rect x="6" y="11" width="1" height="1" fill="#ffffff"/><rect x="7" y="11" width="1" height="1" fill="#ffffff"/><rect x="4" y="1" width="1" height="1" fill="#716f64"/><rect x="5" y="1" width="1" height="1" fill="#716f64"/><rect x="6" y="1" width="1" height="1" fill="#716f64"/><rect x="7" y="1" width="1" height="1" fill="#716f64"/><rect x="2" y="2" width="1" height="1" fill="#716f64"/><rect x="3" y="2" width="1" height="1" fill="#716f64"/><rect x="8" y="2" width="1" height="1" fill="#716f64"/><rect x="9" y="2" width="1" height="1" fill="#716f64"/><rect x="2" y="3" width="1" height="1" fill="#716f64"/><rect x="9" y="3" width="1" height="1" fill="#f1efe2"/><rect x="1" y="4" width="1" height="1" fill="#716f64"/><rect x="10" y="4" width="1" height="1" fill="#f1efe2"/><rect x="1" y="5" width="1" height="1" fill="#716f64"/><rect x="10" y="5" width="1" height="1" fill="#f1efe2"/><rect x="1" y="6" width="1" height="1" fill="#716f64"/><rect x="10" y="6" width="1" height="1" fill="#f1efe2"/><rect x="1" y="7" width="1" height="1" fill="#716f64"/><rect x="10" y="7" width="1" height="1" fill="#f1efe2"/><rect x="2" y="8" width="1" height="1" fill="#716f64"/><rect x="9" y="8" width="1" height="1" fill="#f1efe2"/><rect x="2" y="9" width="1" height="1" fill="#f1efe2"/><rect x="3" y="9" width="1" height="1" fill="#f1efe2"/><rect x="8" y="9" width="1" height="1" fill="#f1efe2"/><rect x="9" y="9" width="1" height="1" fill="#f1efe2"/><rect x="4" y="10" width="1" height="1" fill="#f1efe2"/><rect x="5" y="10" width="1" height="1" fill="#f1efe2"/><rect x="6" y="10" width="1" height="1" fill="#f1efe2"/><rect x="7" y="10" width="1" height="1" fill="#f1efe2"/></svg>
<div style="position:absolute;left:1150px;top:107px;white-space:nowrap;font-size:11px;line-height:13px;letter-spacing:-0.2px;">1/9</div>
<svg style="left:1136px;top:130px" width="12" height="12" shape-rendering="crispEdges"><circle cx="6" cy="6" r="5" fill="#fff"/><rect x="4" y="0" width="1" height="1" fill="#aca899"/><rect x="5" y="0" width="1" height="1" fill="#aca899"/><rect x="6" y="0" width="1" height="1" fill="#aca899"/><rect x="7" y="0" width="1" height="1" fill="#aca899"/><rect x="2" y="1" width="1" height="1" fill="#aca899"/><rect x="3" y="1" width="1" height="1" fill="#aca899"/><rect x="8" y="1" width="1" height="1" fill="#aca899"/><rect x="9" y="1" width="1" height="1" fill="#aca899"/><rect x="1" y="2" width="1" height="1" fill="#aca899"/><rect x="10" y="2" width="1" height="1" fill="#ffffff"/><rect x="1" y="3" width="1" height="1" fill="#aca899"/><rect x="10" y="3" width="1" height="1" fill="#ffffff"/><rect x="0" y="4" width="1" height="1" fill="#aca899"/><rect x="11" y="4" width="1" height="1" fill="#ffffff"/><rect x="0" y="5" width="1" height="1" fill="#aca899"/><rect x="11" y="5" width="1" height="1" fill="#ffffff"/><rect x="0" y="6" width="1" height="1" fill="#aca899"/><rect x="11" y="6" width="1" height="1" fill="#ffffff"/><rect x="0" y="7" width="1" height="1" fill="#aca899"/><rect x="11" y="7" width="1" height="1" fill="#ffffff"/><rect x="1" y="8" width="1" height="1" fill="#aca899"/><rect x="10" y="8" width="1" height="1" fill="#ffffff"/><rect x="1" y="9" width="1" height="1" fill="#aca899"/><rect x="10" y="9" width="1" height="1" fill="#ffffff"/><rect x="2" y="10" width="1" height="1" fill="#ffffff"/><rect x="3" y="10" width="1" height="1" fill="#ffffff"/><rect x="8" y="10" width="1" height="1" fill="#ffffff"/><rect x="9" y="10" width="1" height="1" fill="#ffffff"/><rect x="4" y="11" width="1" height="1" fill="#ffffff"/><rect x="5" y="11" width="1" height="1" fill="#ffffff"/><rect x="6" y="11" width="1" height="1" fill="#ffffff"/><rect x="7" y="11" width="1" height="1" fill="#ffffff"/><rect x="4" y="1" width="1" height="1" fill="#716f64"/><rect x="5" y="1" width="1" height="1" fill="#716f64"/><rect x="6" y="1" width="1" height="1" fill="#716f64"/><rect x="7" y="1" width="1" height="1" fill="#716f64"/><rect x="2" y="2" width="1" height="1" fill="#716f64"/><rect x="3" y="2" width="1" height="1" fill="#716f64"/><rect x="8" y="2" width="1" height="1" fill="#716f64"/><rect x="9" y="2" width="1" height="1" fill="#716f64"/><rect x="2" y="3" width="1" height="1" fill="#716f64"/><rect x="9" y="3" width="1" height="1" fill="#f1efe2"/><rect x="1" y="4" width="1" height="1" fill="#716f64"/><rect x="10" y="4" width="1" height="1" fill="#f1efe2"/><rect x="1" y="5" width="1" height="1" fill="#716f64"/><rect x="10" y="5" width="1" height="1" fill="#f1efe2"/><rect x="1" y="6" width="1" height="1" fill="#716f64"/><rect x="10" y="6" width="1" height="1" fill="#f1efe2"/><rect x="1" y="7" width="1" height="1" fill="#716f64"/><rect x="10" y="7" width="1" height="1" fill="#f1efe2"/><rect x="2" y="8" width="1" height="1" fill="#716f64"/><rect x="9" y="8" width="1" height="1" fill="#f1efe2"/><rect x="2" y="9" width="1" height="1" fill="#f1efe2"/><rect x="3" y="9" width="1" height="1" fill="#f1efe2"/><rect x="8" y="9" width="1" height="1" fill="#f1efe2"/><rect x="9" y="9" width="1" height="1" fill="#f1efe2"/><rect x="4" y="10" width="1" height="1" fill="#f1efe2"/><rect x="5" y="10" width="1" height="1" fill="#f1efe2"/><rect x="6" y="10" width="1" height="1" fill="#f1efe2"/><rect x="7" y="10" width="1" height="1" fill="#f1efe2"/></svg>
<div style="position:absolute;left:1150px;top:130px;white-space:nowrap;font-size:11px;line-height:13px;letter-spacing:-0.2px;">1/12</div>
<svg style="left:1136px;top:153px" width="12" height="12" shape-rendering="crispEdges"><circle cx="6" cy="6" r="5" fill="#fff"/><rect x="4" y="0" width="1" height="1" fill="#aca899"/><rect x="5" y="0" width="1" height="1" fill="#aca899"/><rect x="6" y="0" width="1" height="1" fill="#aca899"/><rect x="7" y="0" width="1" height="1" fill="#aca899"/><rect x="2" y="1" width="1" height="1" fill="#aca899"/><rect x="3" y="1" width="1" height="1" fill="#aca899"/><rect x="8" y="1" width="1" height="1" fill="#aca899"/><rect x="9" y="1" width="1" height="1" fill="#aca899"/><rect x="1" y="2" width="1" height="1" fill="#aca899"/><rect x="10" y="2" width="1" height="1" fill="#ffffff"/><rect x="1" y="3" width="1" height="1" fill="#aca899"/><rect x="10" y="3" width="1" height="1" fill="#ffffff"/><rect x="0" y="4" width="1" height="1" fill="#aca899"/><rect x="11" y="4" width="1" height="1" fill="#ffffff"/><rect x="0" y="5" width="1" height="1" fill="#aca899"/><rect x="11" y="5" width="1" height="1" fill="#ffffff"/><rect x="0" y="6" width="1" height="1" fill="#aca899"/><rect x="11" y="6" width="1" height="1" fill="#ffffff"/><rect x="0" y="7" width="1" height="1" fill="#aca899"/><rect x="11" y="7" width="1" height="1" fill="#ffffff"/><rect x="1" y="8" width="1" height="1" fill="#aca899"/><rect x="10" y="8" width="1" height="1" fill="#ffffff"/><rect x="1" y="9" width="1" height="1" fill="#aca899"/><rect x="10" y="9" width="1" height="1" fill="#ffffff"/><rect x="2" y="10" width="1" height="1" fill="#ffffff"/><rect x="3" y="10" width="1" height="1" fill="#ffffff"/><rect x="8" y="10" width="1" height="1" fill="#ffffff"/><rect x="9" y="10" width="1" height="1" fill="#ffffff"/><rect x="4" y="11" width="1" height="1" fill="#ffffff"/><rect x="5" y="11" width="1" height="1" fill="#ffffff"/><rect x="6" y="11" width="1" height="1" fill="#ffffff"/><rect x="7" y="11" width="1" height="1" fill="#ffffff"/><rect x="4" y="1" width="1" height="1" fill="#716f64"/><rect x="5" y="1" width="1" height="1" fill="#716f64"/><rect x="6" y="1" width="1" height="1" fill="#716f64"/><rect x="7" y="1" width="1" height="1" fill="#716f64"/><rect x="2" y="2" width="1" height="1" fill="#716f64"/><rect x="3" y="2" width="1" height="1" fill="#716f64"/><rect x="8" y="2" width="1" height="1" fill="#716f64"/><rect x="9" y="2" width="1" height="1" fill="#716f64"/><rect x="2" y="3" width="1" height="1" fill="#716f64"/><rect x="9" y="3" width="1" height="1" fill="#f1efe2"/><rect x="1" y="4" width="1" height="1" fill="#716f64"/><rect x="10" y="4" width="1" height="1" fill="#f1efe2"/><rect x="1" y="5" width="1" height="1" fill="#716f64"/><rect x="10" y="5" width="1" height="1" fill="#f1efe2"/><rect x="1" y="6" width="1" height="1" fill="#716f64"/><rect x="10" y="6" width="1" height="1" fill="#f1efe2"/><rect x="1" y="7" width="1" height="1" fill="#716f64"/><rect x="10" y="7" width="1" height="1" fill="#f1efe2"/><rect x="2" y="8" width="1" height="1" fill="#716f64"/><rect x="9" y="8" width="1" height="1" fill="#f1efe2"/><rect x="2" y="9" width="1" height="1" fill="#f1efe2"/><rect x="3" y="9" width="1" height="1" fill="#f1efe2"/><rect x="8" y="9" width="1" height="1" fill="#f1efe2"/><rect x="9" y="9" width="1" height="1" fill="#f1efe2"/><rect x="4" y="10" width="1" height="1" fill="#f1efe2"/><rect x="5" y="10" width="1" height="1" fill="#f1efe2"/><rect x="6" y="10" width="1" height="1" fill="#f1efe2"/><rect x="7" y="10" width="1" height="1" fill="#f1efe2"/></svg>
<div style="position:absolute;left:1150px;top:153px;white-space:nowrap;font-size:11px;line-height:13px;letter-spacing:-0.2px;">1/24</div>
<div style="position:absolute;left:825px;top:185px;width:360px;height:38px;border:1px solid #fff;"></div><div style="position:absolute;left:824px;top:184px;width:360px;height:38px;border:1px solid #aca899;"></div><div style="position:absolute;left:831px;top:177px;width:154px;height:14px;background:#ECE9D8;"></div><div style="position:absolute;left:833px;top:179px;white-space:nowrap;font-size:11px;line-height:13px;letter-spacing:-0.2px;">Standard Frequency Weighting</div>
<svg style="left:869px;top:201px" width="12" height="12" shape-rendering="crispEdges"><circle cx="6" cy="6" r="5" fill="#fff"/><rect x="4" y="0" width="1" height="1" fill="#aca899"/><rect x="5" y="0" width="1" height="1" fill="#aca899"/><rect x="6" y="0" width="1" height="1" fill="#aca899"/><rect x="7" y="0" width="1" height="1" fill="#aca899"/><rect x="2" y="1" width="1" height="1" fill="#aca899"/><rect x="3" y="1" width="1" height="1" fill="#aca899"/><rect x="8" y="1" width="1" height="1" fill="#aca899"/><rect x="9" y="1" width="1" height="1" fill="#aca899"/><rect x="1" y="2" width="1" height="1" fill="#aca899"/><rect x="10" y="2" width="1" height="1" fill="#ffffff"/><rect x="1" y="3" width="1" height="1" fill="#aca899"/><rect x="10" y="3" width="1" height="1" fill="#ffffff"/><rect x="0" y="4" width="1" height="1" fill="#aca899"/><rect x="11" y="4" width="1" height="1" fill="#ffffff"/><rect x="0" y="5" width="1" height="1" fill="#aca899"/><rect x="11" y="5" width="1" height="1" fill="#ffffff"/><rect x="0" y="6" width="1" height="1" fill="#aca899"/><rect x="11" y="6" width="1" height="1" fill="#ffffff"/><rect x="0" y="7" width="1" height="1" fill="#aca899"/><rect x="11" y="7" width="1" height="1" fill="#ffffff"/><rect x="1" y="8" width="1" height="1" fill="#aca899"/><rect x="10" y="8" width="1" height="1" fill="#ffffff"/><rect x="1" y="9" width="1" height="1" fill="#aca899"/><rect x="10" y="9" width="1" height="1" fill="#ffffff"/><rect x="2" y="10" width="1" height="1" fill="#ffffff"/><rect x="3" y="10" width="1" height="1" fill="#ffffff"/><rect x="8" y="10" width="1" height="1" fill="#ffffff"/><rect x="9" y="10" width="1" height="1" fill="#ffffff"/><rect x="4" y="11" width="1" height="1" fill="#ffffff"/><rect x="5" y="11" width="1" height="1" fill="#ffffff"/><rect x="6" y="11" width="1" height="1" fill="#ffffff"/><rect x="7" y="11" width="1" height="1" fill="#ffffff"/><rect x="4" y="1" width="1" height="1" fill="#716f64"/><rect x="5" y="1" width="1" height="1" fill="#716f64"/><rect x="6" y="1" width="1" height="1" fill="#716f64"/><rect x="7" y="1" width="1" height="1" fill="#716f64"/><rect x="2" y="2" width="1" height="1" fill="#716f64"/><rect x="3" y="2" width="1" height="1" fill="#716f64"/><rect x="8" y="2" width="1" height="1" fill="#716f64"/><rect x="9" y="2" width="1" height="1" fill="#716f64"/><rect x="2" y="3" width="1" height="1" fill="#716f64"/><rect x="9" y="3" width="1" height="1" fill="#f1efe2"/><rect x="1" y="4" width="1" height="1" fill="#716f64"/><rect x="10" y="4" width="1" height="1" fill="#f1efe2"/><rect x="1" y="5" width="1" height="1" fill="#716f64"/><rect x="10" y="5" width="1" height="1" fill="#f1efe2"/><rect x="1" y="6" width="1" height="1" fill="#716f64"/><rect x="10" y="6" width="1" height="1" fill="#f1efe2"/><rect x="1" y="7" width="1" height="1" fill="#716f64"/><rect x="10" y="7" width="1" height="1" fill="#f1efe2"/><rect x="2" y="8" width="1" height="1" fill="#716f64"/><rect x="9" y="8" width="1" height="1" fill="#f1efe2"/><rect x="2" y="9" width="1" height="1" fill="#f1efe2"/><rect x="3" y="9" width="1" height="1" fill="#f1efe2"/><rect x="8" y="9" width="1" height="1" fill="#f1efe2"/><rect x="9" y="9" width="1" height="1" fill="#f1efe2"/><rect x="4" y="10" width="1" height="1" fill="#f1efe2"/><rect x="5" y="10" width="1" height="1" fill="#f1efe2"/><rect x="6" y="10" width="1" height="1" fill="#f1efe2"/><rect x="7" y="10" width="1" height="1" fill="#f1efe2"/><rect x="5" y="4" width="2" height="4" fill="#000"/><rect x="4" y="5" width="4" height="2" fill="#000"/></svg>
<div style="position:absolute;left:883px;top:202px;white-space:nowrap;font-size:11px;line-height:13px;letter-spacing:-0.2px;">Flat (none)</div>
<svg style="left:981px;top:201px" width="12" height="12" shape-rendering="crispEdges"><circle cx="6" cy="6" r="5" fill="#fff"/><rect x="4" y="0" width="1" height="1" fill="#aca899"/><rect x="5" y="0" width="1" height="1" fill="#aca899"/><rect x="6" y="0" width="1" height="1" fill="#aca899"/><rect x="7" y="0" width="1" height="1" fill="#aca899"/><rect x="2" y="1" width="1" height="1" fill="#aca899"/><rect x="3" y="1" width="1" height="1" fill="#aca899"/><rect x="8" y="1" width="1" height="1" fill="#aca899"/><rect x="9" y="1" width="1" height="1" fill="#aca899"/><rect x="1" y="2" width="1" height="1" fill="#aca899"/><rect x="10" y="2" width="1" height="1" fill="#ffffff"/><rect x="1" y="3" width="1" height="1" fill="#aca899"/><rect x="10" y="3" width="1" height="1" fill="#ffffff"/><rect x="0" y="4" width="1" height="1" fill="#aca899"/><rect x="11" y="4" width="1" height="1" fill="#ffffff"/><rect x="0" y="5" width="1" height="1" fill="#aca899"/><rect x="11" y="5" width="1" height="1" fill="#ffffff"/><rect x="0" y="6" width="1" height="1" fill="#aca899"/><rect x="11" y="6" width="1" height="1" fill="#ffffff"/><rect x="0" y="7" width="1" height="1" fill="#aca899"/><rect x="11" y="7" width="1" height="1" fill="#ffffff"/><rect x="1" y="8" width="1" height="1" fill="#aca899"/><rect x="10" y="8" width="1" height="1" fill="#ffffff"/><rect x="1" y="9" width="1" height="1" fill="#aca899"/><rect x="10" y="9" width="1" height="1" fill="#ffffff"/><rect x="2" y="10" width="1" height="1" fill="#ffffff"/><rect x="3" y="10" width="1" height="1" fill="#ffffff"/><rect x="8" y="10" width="1" height="1" fill="#ffffff"/><rect x="9" y="10" width="1" height="1" fill="#ffffff"/><rect x="4" y="11" width="1" height="1" fill="#ffffff"/><rect x="5" y="11" width="1" height="1" fill="#ffffff"/><rect x="6" y="11" width="1" height="1" fill="#ffffff"/><rect x="7" y="11" width="1" height="1" fill="#ffffff"/><rect x="4" y="1" width="1" height="1" fill="#716f64"/><rect x="5" y="1" width="1" height="1" fill="#716f64"/><rect x="6" y="1" width="1" height="1" fill="#716f64"/><rect x="7" y="1" width="1" height="1" fill="#716f64"/><rect x="2" y="2" width="1" height="1" fill="#716f64"/><rect x="3" y="2" width="1" height="1" fill="#716f64"/><rect x="8" y="2" width="1" height="1" fill="#716f64"/><rect x="9" y="2" width="1" height="1" fill="#716f64"/><rect x="2" y="3" width="1" height="1" fill="#716f64"/><rect x="9" y="3" width="1" height="1" fill="#f1efe2"/><rect x="1" y="4" width="1" height="1" fill="#716f64"/><rect x="10" y="4" width="1" height="1" fill="#f1efe2"/><rect x="1" y="5" width="1" height="1" fill="#716f64"/><rect x="10" y="5" width="1" height="1" fill="#f1efe2"/><rect x="1" y="6" width="1" height="1" fill="#716f64"/><rect x="10" y="6" width="1" height="1" fill="#f1efe2"/><rect x="1" y="7" width="1" height="1" fill="#716f64"/><rect x="10" y="7" width="1" height="1" fill="#f1efe2"/><rect x="2" y="8" width="1" height="1" fill="#716f64"/><rect x="9" y="8" width="1" height="1" fill="#f1efe2"/><rect x="2" y="9" width="1" height="1" fill="#f1efe2"/><rect x="3" y="9" width="1" height="1" fill="#f1efe2"/><rect x="8" y="9" width="1" height="1" fill="#f1efe2"/><rect x="9" y="9" width="1" height="1" fill="#f1efe2"/><rect x="4" y="10" width="1" height="1" fill="#f1efe2"/><rect x="5" y="10" width="1" height="1" fill="#f1efe2"/><rect x="6" y="10" width="1" height="1" fill="#f1efe2"/><rect x="7" y="10" width="1" height="1" fill="#f1efe2"/></svg>
<div style="position:absolute;left:995px;top:202px;white-space:nowrap;font-size:11px;line-height:13px;letter-spacing:-0.2px;">A</div>
<svg style="left:1046px;top:201px" width="12" height="12" shape-rendering="crispEdges"><circle cx="6" cy="6" r="5" fill="#fff"/><rect x="4" y="0" width="1" height="1" fill="#aca899"/><rect x="5" y="0" width="1" height="1" fill="#aca899"/><rect x="6" y="0" width="1" height="1" fill="#aca899"/><rect x="7" y="0" width="1" height="1" fill="#aca899"/><rect x="2" y="1" width="1" height="1" fill="#aca899"/><rect x="3" y="1" width="1" height="1" fill="#aca899"/><rect x="8" y="1" width="1" height="1" fill="#aca899"/><rect x="9" y="1" width="1" height="1" fill="#aca899"/><rect x="1" y="2" width="1" height="1" fill="#aca899"/><rect x="10" y="2" width="1" height="1" fill="#ffffff"/><rect x="1" y="3" width="1" height="1" fill="#aca899"/><rect x="10" y="3" width="1" height="1" fill="#ffffff"/><rect x="0" y="4" width="1" height="1" fill="#aca899"/><rect x="11" y="4" width="1" height="1" fill="#ffffff"/><rect x="0" y="5" width="1" height="1" fill="#aca899"/><rect x="11" y="5" width="1" height="1" fill="#ffffff"/><rect x="0" y="6" width="1" height="1" fill="#aca899"/><rect x="11" y="6" width="1" height="1" fill="#ffffff"/><rect x="0" y="7" width="1" height="1" fill="#aca899"/><rect x="11" y="7" width="1" height="1" fill="#ffffff"/><rect x="1" y="8" width="1" height="1" fill="#aca899"/><rect x="10" y="8" width="1" height="1" fill="#ffffff"/><rect x="1" y="9" width="1" height="1" fill="#aca899"/><rect x="10" y="9" width="1" height="1" fill="#ffffff"/><rect x="2" y="10" width="1" height="1" fill="#ffffff"/><rect x="3" y="10" width="1" height="1" fill="#ffffff"/><rect x="8" y="10" width="1" height="1" fill="#ffffff"/><rect x="9" y="10" width="1" height="1" fill="#ffffff"/><rect x="4" y="11" width="1" height="1" fill="#ffffff"/><rect x="5" y="11" width="1" height="1" fill="#ffffff"/><rect x="6" y="11" width="1" height="1" fill="#ffffff"/><rect x="7" y="11" width="1" height="1" fill="#ffffff"/><rect x="4" y="1" width="1" height="1" fill="#716f64"/><rect x="5" y="1" width="1" height="1" fill="#716f64"/><rect x="6" y="1" width="1" height="1" fill="#716f64"/><rect x="7" y="1" width="1" height="1" fill="#716f64"/><rect x="2" y="2" width="1" height="1" fill="#716f64"/><rect x="3" y="2" width="1" height="1" fill="#716f64"/><rect x="8" y="2" width="1" height="1" fill="#716f64"/><rect x="9" y="2" width="1" height="1" fill="#716f64"/><rect x="2" y="3" width="1" height="1" fill="#716f64"/><rect x="9" y="3" width="1" height="1" fill="#f1efe2"/><rect x="1" y="4" width="1" height="1" fill="#716f64"/><rect x="10" y="4" width="1" height="1" fill="#f1efe2"/><rect x="1" y="5" width="1" height="1" fill="#716f64"/><rect x="10" y="5" width="1" height="1" fill="#f1efe2"/><rect x="1" y="6" width="1" height="1" fill="#716f64"/><rect x="10" y="6" width="1" height="1" fill="#f1efe2"/><rect x="1" y="7" width="1" height="1" fill="#716f64"/><rect x="10" y="7" width="1" height="1" fill="#f1efe2"/><rect x="2" y="8" width="1" height="1" fill="#716f64"/><rect x="9" y="8" width="1" height="1" fill="#f1efe2"/><rect x="2" y="9" width="1" height="1" fill="#f1efe2"/><rect x="3" y="9" width="1" height="1" fill="#f1efe2"/><rect x="8" y="9" width="1" height="1" fill="#f1efe2"/><rect x="9" y="9" width="1" height="1" fill="#f1efe2"/><rect x="4" y="10" width="1" height="1" fill="#f1efe2"/><rect x="5" y="10" width="1" height="1" fill="#f1efe2"/><rect x="6" y="10" width="1" height="1" fill="#f1efe2"/><rect x="7" y="10" width="1" height="1" fill="#f1efe2"/></svg>
<div style="position:absolute;left:1059px;top:202px;white-space:nowrap;font-size:11px;line-height:13px;letter-spacing:-0.2px;">B</div>
<svg style="left:1115px;top:201px" width="12" height="12" shape-rendering="crispEdges"><circle cx="6" cy="6" r="5" fill="#fff"/><rect x="4" y="0" width="1" height="1" fill="#aca899"/><rect x="5" y="0" width="1" height="1" fill="#aca899"/><rect x="6" y="0" width="1" height="1" fill="#aca899"/><rect x="7" y="0" width="1" height="1" fill="#aca899"/><rect x="2" y="1" width="1" height="1" fill="#aca899"/><rect x="3" y="1" width="1" height="1" fill="#aca899"/><rect x="8" y="1" width="1" height="1" fill="#aca899"/><rect x="9" y="1" width="1" height="1" fill="#aca899"/><rect x="1" y="2" width="1" height="1" fill="#aca899"/><rect x="10" y="2" width="1" height="1" fill="#ffffff"/><rect x="1" y="3" width="1" height="1" fill="#aca899"/><rect x="10" y="3" width="1" height="1" fill="#ffffff"/><rect x="0" y="4" width="1" height="1" fill="#aca899"/><rect x="11" y="4" width="1" height="1" fill="#ffffff"/><rect x="0" y="5" width="1" height="1" fill="#aca899"/><rect x="11" y="5" width="1" height="1" fill="#ffffff"/><rect x="0" y="6" width="1" height="1" fill="#aca899"/><rect x="11" y="6" width="1" height="1" fill="#ffffff"/><rect x="0" y="7" width="1" height="1" fill="#aca899"/><rect x="11" y="7" width="1" height="1" fill="#ffffff"/><rect x="1" y="8" width="1" height="1" fill="#aca899"/><rect x="10" y="8" width="1" height="1" fill="#ffffff"/><rect x="1" y="9" width="1" height="1" fill="#aca899"/><rect x="10" y="9" width="1" height="1" fill="#ffffff"/><rect x="2" y="10" width="1" height="1" fill="#ffffff"/><rect x="3" y="10" width="1" height="1" fill="#ffffff"/><rect x="8" y="10" width="1" height="1" fill="#ffffff"/><rect x="9" y="10" width="1" height="1" fill="#ffffff"/><rect x="4" y="11" width="1" height="1" fill="#ffffff"/><rect x="5" y="11" width="1" height="1" fill="#ffffff"/><rect x="6" y="11" width="1" height="1" fill="#ffffff"/><rect x="7" y="11" width="1" height="1" fill="#ffffff"/><rect x="4" y="1" width="1" height="1" fill="#716f64"/><rect x="5" y="1" width="1" height="1" fill="#716f64"/><rect x="6" y="1" width="1" height="1" fill="#716f64"/><rect x="7" y="1" width="1" height="1" fill="#716f64"/><rect x="2" y="2" width="1" height="1" fill="#716f64"/><rect x="3" y="2" width="1" height="1" fill="#716f64"/><rect x="8" y="2" width="1" height="1" fill="#716f64"/><rect x="9" y="2" width="1" height="1" fill="#716f64"/><rect x="2" y="3" width="1" height="1" fill="#716f64"/><rect x="9" y="3" width="1" height="1" fill="#f1efe2"/><rect x="1" y="4" width="1" height="1" fill="#716f64"/><rect x="10" y="4" width="1" height="1" fill="#f1efe2"/><rect x="1" y="5" width="1" height="1" fill="#716f64"/><rect x="10" y="5" width="1" height="1" fill="#f1efe2"/><rect x="1" y="6" width="1" height="1" fill="#716f64"/><rect x="10" y="6" width="1" height="1" fill="#f1efe2"/><rect x="1" y="7" width="1" height="1" fill="#716f64"/><rect x="10" y="7" width="1" height="1" fill="#f1efe2"/><rect x="2" y="8" width="1" height="1" fill="#716f64"/><rect x="9" y="8" width="1" height="1" fill="#f1efe2"/><rect x="2" y="9" width="1" height="1" fill="#f1efe2"/><rect x="3" y="9" width="1" height="1" fill="#f1efe2"/><rect x="8" y="9" width="1" height="1" fill="#f1efe2"/><rect x="9" y="9" width="1" height="1" fill="#f1efe2"/><rect x="4" y="10" width="1" height="1" fill="#f1efe2"/><rect x="5" y="10" width="1" height="1" fill="#f1efe2"/><rect x="6" y="10" width="1" height="1" fill="#f1efe2"/><rect x="7" y="10" width="1" height="1" fill="#f1efe2"/></svg>
<div style="position:absolute;left:1129px;top:202px;white-space:nowrap;font-size:11px;line-height:13px;letter-spacing:-0.2px;">C</div>
<div style="position:absolute;left:825px;top:237px;width:360px;height:100px;border:1px solid #fff;"></div><div style="position:absolute;left:824px;top:236px;width:360px;height:100px;border:1px solid #aca899;"></div><div style="position:absolute;left:831px;top:229px;width:133px;height:14px;background:#ECE9D8;"></div><div style="position:absolute;left:833px;top:231px;white-space:nowrap;font-size:11px;line-height:13px;letter-spacing:-0.2px;">Microphone Compensation</div>
<div style="position:absolute;left:937px;top:254px;width:13px;height:13px;background:#fff;border-top:1px solid #aca899;border-left:1px solid #aca899;border-right:1px solid #fff;border-bottom:1px solid #fff;box-shadow:inset 1px 1px #716f64, inset -1px -1px #f1efe2;"></div>
<div style="position:absolute;left:952px;top:255px;white-space:nowrap;font-size:11px;line-height:13px;letter-spacing:-0.2px;">Enable Compensation</div>
<div style="position:absolute;left:841px;top:276px;width:54px;height:23px;background:#ECE9D8;box-shadow:inset 1px 1px #fff, inset -1px -1px #716f64, inset -2px -2px #aca899;"></div><div style="position:absolute;left:841px;top:280px;white-space:nowrap;font-size:11px;line-height:14px;width:54px;text-align:center;letter-spacing:-0.2px;">Select...</div>
<div style="position:absolute;left:841px;top:306px;width:54px;height:23px;background:#ECE9D8;box-shadow:inset 1px 1px #fff, inset -1px -1px #716f64, inset -2px -2px #aca899;"></div><div style="position:absolute;left:841px;top:310px;white-space:nowrap;font-size:11px;line-height:14px;width:54px;text-align:center;letter-spacing:-0.2px;">Select...</div>
<div style="position:absolute;left:880px;top:281px;white-space:nowrap;font-size:11px;line-height:14px;width:51px;text-align:right;letter-spacing:-0.2px;">Left:</div>
<div style="position:absolute;left:880px;top:311px;white-space:nowrap;font-size:11px;line-height:14px;width:51px;text-align:right;letter-spacing:-0.2px;">Right:</div>
<div style="position:absolute;left:937px;top:277px;width:224px;height:20px;background:#fff;border-top:2px solid #808080;border-left:2px solid #808080;border-right:1px solid #f0f0e8;border-bottom:1px solid #f0f0e8;"></div>
<div style="position:absolute;left:937px;top:308px;width:224px;height:20px;background:#fff;border-top:2px solid #808080;border-left:2px solid #808080;border-right:1px solid #f0f0e8;border-bottom:1px solid #f0f0e8;"></div>
<div style="position:absolute;left:1199px;top:79px;width:62px;height:23px;border:1px solid #000;background:#ECE9D8;box-shadow:inset 1px 1px #fff, inset -1px -1px #716f64, inset -2px -2px #aca899;"></div><div style="position:absolute;left:1199px;top:83px;white-space:nowrap;font-size:11px;line-height:14px;width:62px;text-align:center;letter-spacing:-0.2px;">Ok</div>
<div style="position:absolute;left:1199px;top:110px;width:62px;height:23px;background:#ECE9D8;box-shadow:inset 1px 1px #fff, inset -1px -1px #716f64, inset -2px -2px #aca899;"></div><div style="position:absolute;left:1199px;top:114px;white-space:nowrap;font-size:11px;line-height:14px;width:62px;text-align:center;letter-spacing:-0.2px;">Cancel</div>
<div style="position:absolute;left:1199px;top:162px;width:62px;height:23px;background:#ECE9D8;box-shadow:inset 1px 1px #fff, inset -1px -1px #716f64, inset -2px -2px #aca899;"></div><div style="position:absolute;left:1199px;top:166px;white-space:nowrap;font-size:11px;line-height:14px;width:62px;text-align:center;letter-spacing:-0.2px;">Defaults</div>
<div style="position:absolute;left:1199px;top:198px;width:62px;height:23px;background:#ECE9D8;box-shadow:inset 1px 1px #fff, inset -1px -1px #716f64, inset -2px -2px #aca899;"></div><div style="position:absolute;left:1199px;top:202px;white-space:nowrap;font-size:11px;line-height:14px;width:62px;text-align:center;letter-spacing:-0.2px;">Help</div>
<div style="position:absolute;left:0px;top:738px;width:1280px;height:30px;background:linear-gradient(#3168d5 0px,#4993e6 1px,#2e73dc 3px,#245edb 6px,#2460d8 20px,#1f56cf 26px,#1a4ac0 30px);"></div>
<div style="position:absolute;left:0px;top:738px;width:95px;height:30px;border-radius:0 12px 12px 0;background:linear-gradient(#3c9a3c 0px,#5cc05c 2px,#44a844 6px,#38a038 15px,#2f8f2f 25px,#297f29 30px);box-shadow:inset -2px 0 3px #1c5c1c;"></div>
<svg style="left:10px;top:744px" width="20" height="20"><path d="M2 4Q6 1 9 3L8 9Q5 7 1 9Z" fill="#e85a1e"/><path d="M11 3Q14 5 18 3L17 9Q14 11 10 9Z" fill="#8ad040"/><path d="M1 11Q5 9 8 11L7 17Q4 15 0 17Z" fill="#3a7ee8"/><path d="M10 11Q13 13 17 11L16 17Q13 19 9 17Z" fill="#f2c21a"/></svg>
<div style="position:absolute;left:35px;top:744px;white-space:nowrap;font-size:17px;line-height:20px;font-weight:bold;font-style:italic;color:#fff;text-shadow:1px 1px 2px #1a4a1a;">пуск</div>
<svg style="left:108px;top:745px" width="16" height="16"><circle cx="8" cy="7.5" r="7" fill="#e06030"/><path d="M8 0.5A7 7 0 0 1 15 7.5H8Z" fill="#40a040"/><path d="M15 7.5A7 7 0 0 1 8 14.5V7.5Z" fill="#e0b030"/><circle cx="8" cy="7.5" r="5.6" fill="#f0f4fa"/><circle cx="8" cy="7.5" r="3.8" fill="#1a3aa0"/><path d="M6.8 5.3L10.3 7.5L6.8 9.7Z" fill="#fff"/></svg>
<svg style="left:131px;top:745px" width="16" height="16"><path d="M3 2H11L14 5V14H3Z" fill="#f4f8fc" stroke="#2a62c8" stroke-width="1.2"/><path d="M11 1L15 3L9 9L7 10L8 8Z" fill="#3a80e0"/><path d="M5 6Q8 3 10 6T13 11" stroke="#3a7ad8" stroke-width="1.2" fill="none"/><circle cx="14" cy="6" r="1" fill="#e04020"/></svg>
<svg style="left:155px;top:746px" width="15" height="15"><circle cx="7.5" cy="7.5" r="7" fill="#db4437"/><path d="M7.5 7.5L1.4 4A7 7 0 0 0 5 14Z" fill="#1e9e50"/><path d="M7.5 7.5L5 14A7 7 0 0 0 14.5 7.5A7 7 0 0 0 13 3.5Z" fill="#f0c020"/><circle cx="7.5" cy="7.5" r="3.3" fill="#fff"/><circle cx="7.5" cy="7.5" r="2.5" fill="#5a8ae0"/></svg>
<svg style="left:177px;top:746px" width="15" height="13"><rect x="0.5" y="0.5" width="14" height="12" rx="2" fill="#3c9a3c" stroke="#1f6a1f"/><rect x="2" y="2" width="11" height="4" fill="#6cc04c" opacity="0.7"/><path d="M5 3L7 3.5L6.5 6L4.5 5.5Z" fill="#e86020"/><path d="M8 4L10 4.5L9.5 7L7.5 6.5Z" fill="#80d040"/><path d="M4.5 6.5L6.5 7L6 9.5L4 9Z" fill="#4090e0"/><path d="M7.5 7.5L9.5 8L9 10.5L7 10Z" fill="#f0c020"/></svg>
<svg style="left:200px;top:745px" width="16" height="16"><rect x="0.5" y="0.5" width="15" height="15" fill="#fde8c0" stroke="#e88a28"/><rect x="1.5" y="1.5" width="13" height="13" fill="#fff0d4"/><circle cx="8" cy="8" r="4.8" fill="none" stroke="#d88a20" stroke-width="1.3"/><path d="M8 5V8.3H10.5" stroke="#c87010" stroke-width="1.2" fill="none"/></svg>
<svg style="left:224px;top:745px" width="14" height="15"><path d="M1 0.5L4.5 3H9.5L13 0.5L13.5 6Q13 10 9 13L7 14.5L5 13Q1 10 0.5 6Z" fill="#f8f8f8" stroke="#707070" stroke-width="0.6"/><path d="M2.5 6Q5 6.5 6 9.5Q3.5 9 2.5 6ZM11.5 6Q9 6.5 8 9.5Q10.5 9 11.5 6Z" fill="#000"/><path d="M6 12H8" stroke="#999" stroke-width="0.8"/></svg>
<div style="position:absolute;left:284px;top:742px;width:158px;height:23px;border-radius:3px;background:linear-gradient(#4d91f3 0px,#3c81f3 3px,#3a7ef0 18px,#2f6fe0 23px);border:1px solid #2a5cc8;box-shadow:inset 1px 1px #6fa8f8;"></div><svg style="left:292px;top:746px" width="17" height="15"><path d="M1 7L4 4H14L16 7V11H1Z" fill="#c8ccd0" stroke="#60686c"/><rect x="1.5" y="8" width="14" height="3" fill="#9aa0a8"/></svg><div style="position:absolute;left:313px;top:747px;white-space:nowrap;font-size:11px;line-height:14px;color:#fff;letter-spacing:-0.15px;">D:\</div>
<div style="position:absolute;left:444px;top:742px;width:157px;height:23px;border-radius:3px;background:linear-gradient(#4d91f3 0px,#3c81f3 3px,#3a7ef0 18px,#2f6fe0 23px);border:1px solid #2a5cc8;box-shadow:inset 1px 1px #6fa8f8;"></div><svg style="left:453px;top:746px" width="14" height="15"><path d="M1 0.5L4.5 3H9.5L13 0.5L13.5 6Q13 10 9 13L7 14.5L5 13Q1 10 0.5 6Z" fill="#f8f8f8" stroke="#707070" stroke-width="0.6"/><path d="M2.5 6Q5 6.5 6 9.5Q3.5 9 2.5 6ZM11.5 6Q9 6.5 8 9.5Q10.5 9 11.5 6Z" fill="#000"/><path d="M6 12H8" stroke="#999" stroke-width="0.8"/></svg><div style="position:absolute;left:473px;top:747px;white-space:nowrap;font-size:11px;line-height:14px;color:#fff;letter-spacing:-0.15px;">George Benson - [Ins...</div>
<div style="position:absolute;left:603px;top:742px;width:160px;height:23px;border-radius:3px;background:#1e4fbd;border:1px solid #173c94;box-shadow:inset 1px 1px 2px #10307a;"></div><svg style="left:614px;top:746px" width="16" height="16" viewBox="0 0 16 16"><rect x="0" y="0" width="16" height="16" fill="#b0b4c0"/><rect x="0" y="0" width="15" height="15" fill="#f4f6fc"/><rect x="1" y="1" width="14" height="14" fill="#031003"/><path d="M1 3.5H15M1 6.5H15M1 9.5H15M1 12.5H15M3.5 1V15M6.5 1V15M9.5 1V15M12.5 1V15" stroke="#124a10" stroke-width="1"/><path d="M1 5.5L4 6.5L5.5 5L6.5 8L8.5 9L11 6L12 8.5L14.5 11.5L15 14" stroke="#d8f040" stroke-width="1.2" fill="none"/></svg><div style="position:absolute;left:632px;top:747px;white-space:nowrap;font-size:11px;line-height:14px;color:#fff;letter-spacing:-0.15px;">SpectraLAB - FFT Spe...</div>
<div style="position:absolute;left:1096px;top:745px;width:16px;height:16px;background:#3169c8;"></div>
<div style="position:absolute;left:1097px;top:747px;white-space:nowrap;font-size:11px;line-height:13px;color:#fff;">RU</div>
<svg style="left:1119px;top:745px" width="14" height="16"><path d="M1 1H12V12H6L4 15V12H1Z" fill="#fff8c8" stroke="#000"/><text x="3.5" y="10.5" font-family="Liberation Sans" font-weight="bold" font-size="10">?</text></svg>
<svg style="left:1143px;top:744px" width="12" height="20"><rect x="4" y="1" width="6" height="4" fill="none" stroke="#fff"/><rect x="1.5" y="3.5" width="6" height="4" fill="#245edb" stroke="#fff"/><path d="M3 14H9L6 17Z" fill="#fff"/></svg>
<div style="position:absolute;left:1169px;top:738px;width:111px;height:30px;background:linear-gradient(#1290e8 0px,#22a2f4 2px,#0f9ae8 6px,#0d93e4 22px,#0b86d8 30px);border-left:1px solid #1042af;box-shadow:inset 1px 0 #47b4f8;"></div>
<svg style="left:1160px;top:743px" width="19" height="19"><circle cx="9.5" cy="9.5" r="8.5" fill="#3a8ae8" stroke="#d0e8ff" stroke-width="1"/><path d="M11 5L7 9.5L11 14" stroke="#fff" stroke-width="2.2" fill="none"/></svg>
<svg style="left:1181px;top:744px" width="16" height="16"><path d="M2 10L8 7L14 10L8 14Z" fill="#606870" stroke="#303030" stroke-width="0.6"/><path d="M7 1V6M4 4L7 7L10 4" stroke="#40c040" stroke-width="2" fill="none"/></svg>
<svg style="left:1199px;top:744px" width="16" height="16"><circle cx="5" cy="7" r="3" fill="#e0e8f0"/><rect x="4" y="9" width="2" height="5" fill="#c0c8d0"/><circle cx="11" cy="11" r="4" fill="#d04030"/><path d="M9 9L13 13M13 9L9 13" stroke="#fff" stroke-width="1.2"/></svg>
<svg style="left:1214px;top:744px" width="16" height="16"><circle cx="9" cy="7" r="6.5" fill="#f0a020"/><circle cx="9" cy="7" r="3.5" fill="#fff3c0"/><circle cx="6" cy="11" r="4.5" fill="#e02020" stroke="#fff" stroke-width="0.8"/><path d="M4 9L8 13M8 9L4 13" stroke="#fff" stroke-width="1.3"/></svg>
<div style="position:absolute;left:1239px;top:746px;white-space:nowrap;font-size:11px;line-height:14px;color:#fff;">12:22</div>
</body></html>
